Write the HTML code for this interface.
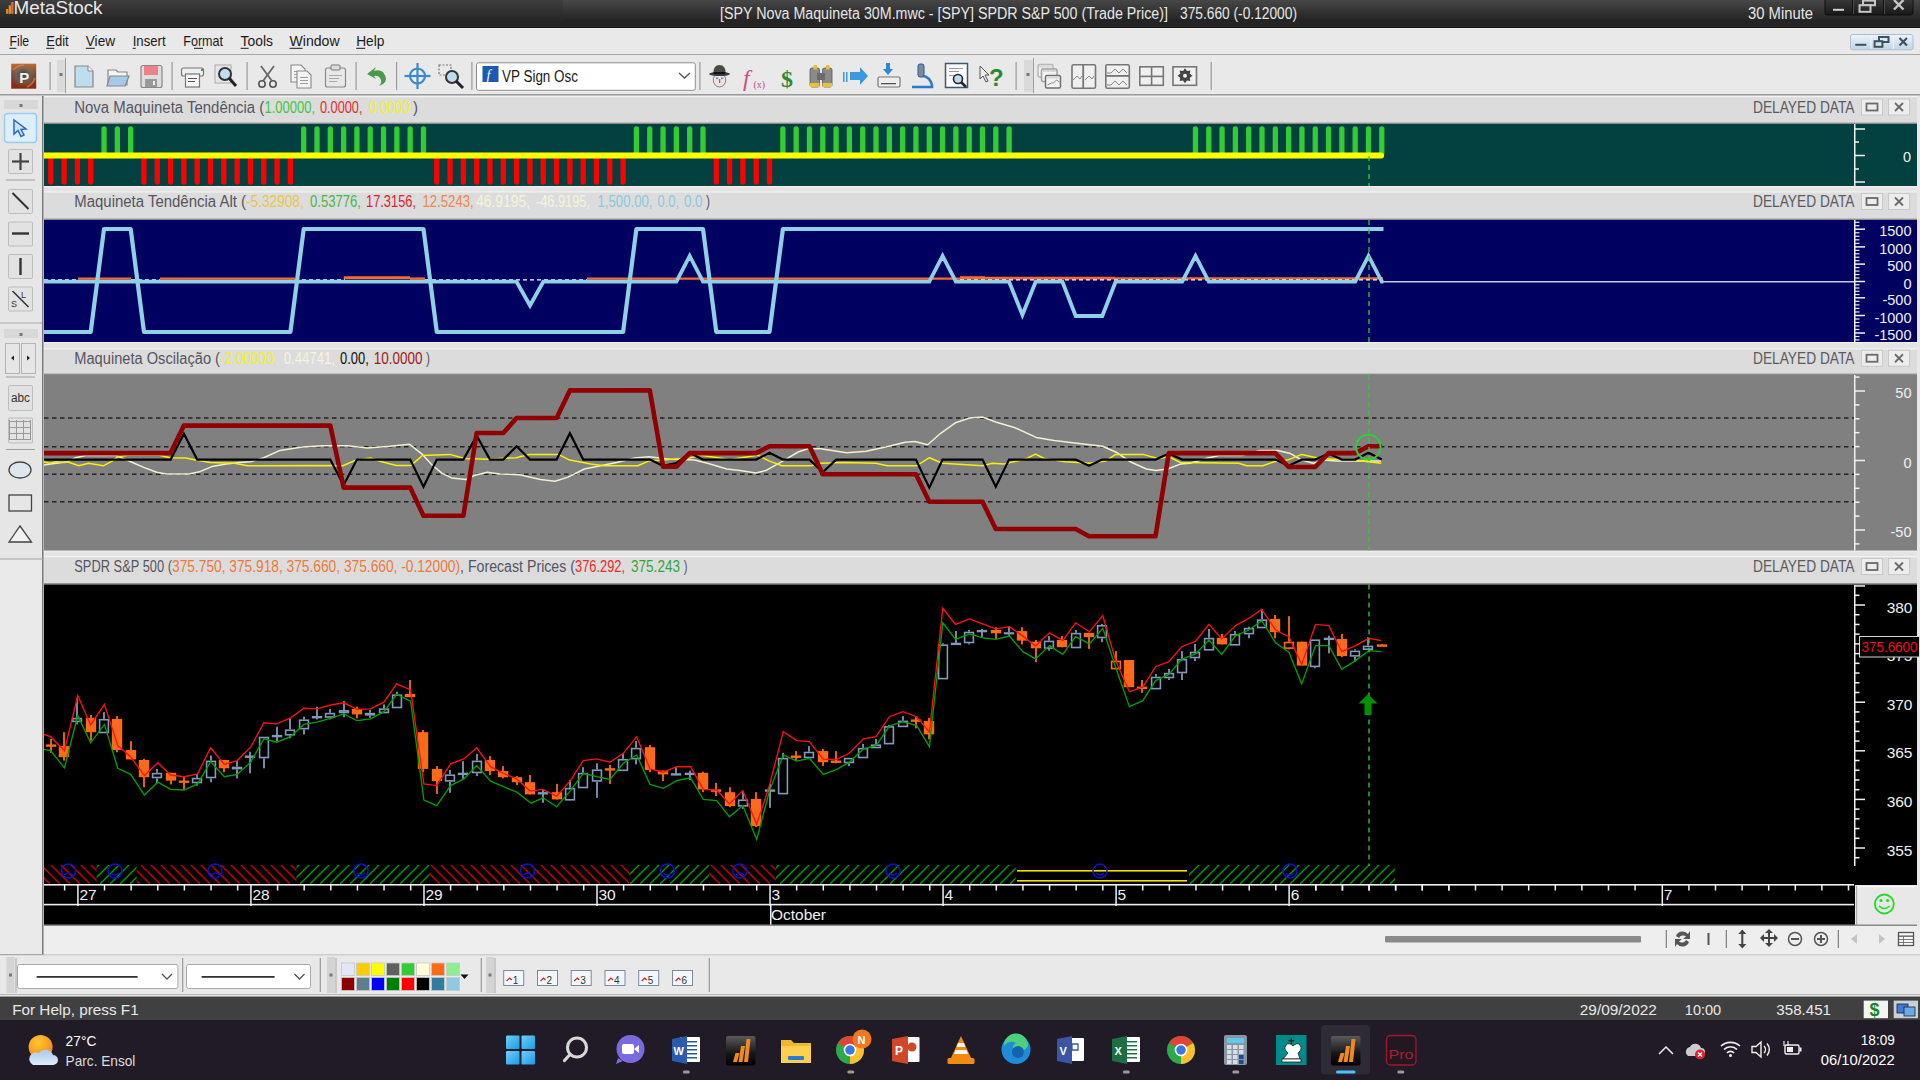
<!DOCTYPE html>
<html><head><meta charset="utf-8"><title>MetaStock</title>
<style>html,body{margin:0;padding:0;width:1920px;height:1080px;overflow:hidden;background:#EBEBEB}
svg{display:block} text{font-family:"Liberation Sans",sans-serif}</style></head>
<body><svg width="1920" height="1080" viewBox="0 0 1920 1080" shape-rendering="auto">
<rect x="0" y="0" width="1920" height="1080" fill="#EBEBEB" />
<defs><linearGradient id="tg" x1="0" y1="0" x2="0" y2="1"><stop offset="0" stop-color="#474747"/><stop offset="0.55" stop-color="#2C2C2C"/><stop offset="0.75" stop-color="#242424"/><stop offset="1" stop-color="#262626"/></linearGradient><linearGradient id="tg2" x1="0" y1="0" x2="0" y2="1"><stop offset="0" stop-color="#3E3E3E"/><stop offset="1" stop-color="#262626"/></linearGradient><linearGradient id="pg" x1="0" y1="0" x2="1" y2="1"><stop offset="0" stop-color="#E08030"/><stop offset="0.5" stop-color="#7A3A1A"/><stop offset="1" stop-color="#C05018"/></linearGradient><linearGradient id="msg" x1="0" y1="0" x2="0" y2="1"><stop offset="0" stop-color="#5A5A5A"/><stop offset="0.6" stop-color="#151515"/><stop offset="1" stop-color="#000"/></linearGradient><pattern id="hr" width="10" height="19" patternUnits="userSpaceOnUse" x="0" y="865"><line x1="-2" y1="-3" x2="20" y2="19" stroke="#D00000" stroke-width="1.3"/><line x1="-12" y1="-3" x2="10" y2="19" stroke="#D00000" stroke-width="1.3"/></pattern><pattern id="hg" width="10" height="19" patternUnits="userSpaceOnUse" x="0" y="865"><line x1="12" y1="-3" x2="-10" y2="19" stroke="#00A000" stroke-width="1.3"/><line x1="22" y1="-3" x2="0" y2="19" stroke="#00A000" stroke-width="1.3"/></pattern><clipPath id="c1"><rect x="44" y="124" width="1810" height="62"/></clipPath><clipPath id="c2"><rect x="44" y="220" width="1810" height="122"/></clipPath><clipPath id="c3"><rect x="44" y="375" width="1810" height="175.5"/></clipPath><clipPath id="c4"><rect x="44" y="584.5" width="1810" height="300"/></clipPath></defs>
<rect x="0" y="0" width="1920" height="28" fill="url(#tg)" />
<rect x="0" y="0" width="563" height="21" fill="url(#tg2)" />
<rect x="0" y="27" width="1920" height="1.2" fill="#161616" />
<rect x="6" y="9.0" width="2.3" height="4.8" fill="#D88A20" />
<rect x="8.7" y="5.300000000000001" width="2.3" height="8.5" fill="#F08A20" />
<rect x="11.2" y="2.0" width="2.3" height="11.8" fill="#E07028" />
<text x="13.5" y="13.8" font-size="17.5" fill="#EAEAEA" text-anchor="start" font-weight="normal" textLength="89" lengthAdjust="spacingAndGlyphs" >MetaStock</text>
<text x="720" y="19" font-size="16" fill="#E6E6E6" text-anchor="start" font-weight="normal" textLength="448" lengthAdjust="spacingAndGlyphs" >[SPY Nova Maquineta 30M.mwc - [SPY] SPDR S&amp;P 500 (Trade Price)]</text>
<text x="1180" y="19" font-size="16" fill="#E6E6E6" text-anchor="start" font-weight="normal" textLength="117" lengthAdjust="spacingAndGlyphs" >375.660 (-0.12000)</text>
<text x="1748" y="19" font-size="16" fill="#E6E6E6" text-anchor="start" font-weight="normal" textLength="65" lengthAdjust="spacingAndGlyphs" >30 Minute</text>
<defs><linearGradient id="wb" x1="0" y1="0" x2="0" y2="1"><stop offset="0" stop-color="#404040"/><stop offset="1" stop-color="#181818"/></linearGradient><linearGradient id="mb" x1="0" y1="0" x2="0" y2="1"><stop offset="0" stop-color="#EEF4FA"/><stop offset="1" stop-color="#C0D4E4"/></linearGradient></defs>
<rect x="1825" y="-4" width="88" height="19" rx="2.5" fill="url(#wb)" stroke="#0E0E0E" stroke-width="1"/>
<rect x="1852" y="0" width="1" height="14" fill="#111" />
<rect x="1853" y="0" width="1" height="14" fill="#4A4A4A" />
<rect x="1883" y="0" width="1" height="14" fill="#111" />
<rect x="1884" y="0" width="1" height="14" fill="#4A4A4A" />
<rect x="1833" y="8.8" width="11" height="2" fill="#CFCFCF" />
<rect x="1863" y="0.6" width="12" height="4.6" fill="none" stroke="#C8C8C8" stroke-width="2"/><rect x="1859.5" y="5.2" width="11" height="6.6" fill="url(#wb)" stroke="#C8C8C8" stroke-width="2"/>
<line x1="1894" y1="0" x2="1903.5" y2="9.5" stroke="#C8C8C8" stroke-width="2.4" />
<line x1="1903.5" y1="0" x2="1894" y2="9.5" stroke="#C8C8C8" stroke-width="2.4" />
<rect x="0" y="28" width="1920" height="26" fill="#E9E9E9" />
<rect x="0" y="54" width="1920" height="1" fill="#A8A8A8" />
<text x="9.4" y="46.3" font-size="15" fill="#1A1A1A" text-anchor="start" font-weight="normal" textLength="19.8" lengthAdjust="spacingAndGlyphs" >File</text>
<text x="46.2" y="46.3" font-size="15" fill="#1A1A1A" text-anchor="start" font-weight="normal" textLength="22.5" lengthAdjust="spacingAndGlyphs" >Edit</text>
<text x="85.8" y="46.3" font-size="15" fill="#1A1A1A" text-anchor="start" font-weight="normal" textLength="29.2" lengthAdjust="spacingAndGlyphs" >View</text>
<text x="132.7" y="46.3" font-size="15" fill="#1A1A1A" text-anchor="start" font-weight="normal" textLength="32.9" lengthAdjust="spacingAndGlyphs" >Insert</text>
<text x="183.3" y="46.3" font-size="15" fill="#1A1A1A" text-anchor="start" font-weight="normal" textLength="39.7" lengthAdjust="spacingAndGlyphs" >Format</text>
<text x="240.6" y="46.3" font-size="15" fill="#1A1A1A" text-anchor="start" font-weight="normal" textLength="32.4" lengthAdjust="spacingAndGlyphs" >Tools</text>
<text x="289.6" y="46.3" font-size="15" fill="#1A1A1A" text-anchor="start" font-weight="normal" textLength="50" lengthAdjust="spacingAndGlyphs" >Window</text>
<text x="356.2" y="46.3" font-size="15" fill="#1A1A1A" text-anchor="start" font-weight="normal" textLength="28.2" lengthAdjust="spacingAndGlyphs" >Help</text>
<rect x="9.4" y="47.8" width="7" height="1" fill="#1A1A1A" />
<rect x="46.2" y="47.8" width="8" height="1" fill="#1A1A1A" />
<rect x="85.8" y="47.8" width="9" height="1" fill="#1A1A1A" />
<rect x="132.7" y="47.8" width="3" height="1" fill="#1A1A1A" />
<rect x="194" y="47.8" width="9" height="1" fill="#1A1A1A" />
<rect x="240.6" y="47.8" width="8" height="1" fill="#1A1A1A" />
<rect x="289.6" y="47.8" width="13" height="1" fill="#1A1A1A" />
<rect x="356.2" y="47.8" width="9" height="1" fill="#1A1A1A" />
<rect x="1850.5" y="34.5" width="62.5" height="15.3" rx="2" fill="url(#mb)" stroke="#A8C0D4" stroke-width="1"/>
<rect x="1870.5" y="35.5" width="1" height="13.5" fill="#F4F8FC" />
<rect x="1892.8" y="35.5" width="1" height="13.5" fill="#F4F8FC" />
<rect x="1855.3" y="43.8" width="11" height="2" fill="#3A5262" />
<rect x="1879" y="37" width="9.5" height="5" fill="none" stroke="#3A5262" stroke-width="2"/><rect x="1874.6" y="41.2" width="7.8" height="5.6" fill="#D8E6F0" stroke="#3A5262" stroke-width="2"/>
<line x1="1899.5" y1="38" x2="1907" y2="45.5" stroke="#3A5262" stroke-width="2.2" />
<line x1="1907" y1="38" x2="1899.5" y2="45.5" stroke="#3A5262" stroke-width="2.2" />
<rect x="0" y="55" width="1920" height="39" fill="#E9E9E9" />
<rect x="0" y="94" width="1920" height="1.5" fill="#9A9A9A" />
<defs><linearGradient id="pg2" x1="0" y1="0" x2="0" y2="1"><stop offset="0" stop-color="#C86A28"/><stop offset="0.45" stop-color="#6A4A3A"/><stop offset="1" stop-color="#8A2810"/></linearGradient><radialGradient id="pg3" cx="0.5" cy="0.45" r="0.5"><stop offset="0" stop-color="#303030" stop-opacity="0.9"/><stop offset="0.6" stop-color="#707070" stop-opacity="0.5"/><stop offset="1" stop-color="#707070" stop-opacity="0"/></radialGradient></defs>
<rect x="11.2" y="63.7" width="25" height="25" fill="url(#pg2)" />
<rect x="11.2" y="63.7" width="25" height="25" fill="url(#pg3)" />
<path d="M27,87 q6,-3 8,-9" fill="none" stroke="#E89040" stroke-width="1.8" stroke-opacity="0.6"/><path d="M13,70 q5,-5 11,-5" fill="none" stroke="#E8A060" stroke-width="1.5" stroke-opacity="0.5"/>
<text x="19.3" y="82.5" font-size="15" fill="#F0F0F0" text-anchor="start" font-weight="bold"  >P</text>
<rect x="49.5" y="62" width="1.2" height="28" fill="#9A9A9A" />
<rect x="171.5" y="62" width="1.2" height="28" fill="#9A9A9A" />
<rect x="246.5" y="62" width="1.2" height="28" fill="#9A9A9A" />
<rect x="355.5" y="62" width="1.2" height="28" fill="#9A9A9A" />
<rect x="396" y="62" width="1.2" height="28" fill="#9A9A9A" />
<rect x="471.3" y="62" width="1.2" height="28" fill="#9A9A9A" />
<rect x="699.3" y="62" width="1.2" height="28" fill="#9A9A9A" />
<rect x="1015.5" y="62" width="1.2" height="28" fill="#9A9A9A" />
<rect x="1210.6" y="62" width="1.2" height="28" fill="#9A9A9A" />
<rect x="57" y="60" width="9" height="32" fill="#DADADA" />
<rect x="59.5" y="73" width="3" height="3" fill="#777" />
<rect x="1024" y="60" width="9" height="32" fill="#DADADA" />
<rect x="1026.5" y="73" width="3" height="3" fill="#777" />
<rect x="65" y="58" width="1" height="35" fill="#A0A0A0" />
<rect x="1033" y="58" width="1" height="35" fill="#A0A0A0" />
<path d="M75,66 h13 l5,5 v16 h-18 z" fill="#BFDDF0" stroke="#888" stroke-width="1.2"/>
<path d="M88,66 v5 h5" fill="#FFF" stroke="#888" stroke-width="1"/>
<path d="M108,70 h8 l2,2 h9 v13 h-19 z" fill="#F4F4F4" stroke="#888" stroke-width="1.2"/>
<path d="M110,76 h19 l-4,10 h-18 z" fill="#A8C8E8" stroke="#888" stroke-width="1.2"/>
<rect x="141" y="65.5" width="21" height="22" rx="2" fill="#DDD" stroke="#888" stroke-width="1.2"/>
<rect x="144" y="66" width="14" height="9" fill="#F08088" />
<rect x="145" y="79" width="12" height="8" fill="#999" />
<rect x="153" y="81" width="2" height="4" fill="#EEE" />
<rect x="181.5" y="68" width="22" height="8" rx="2" fill="#EEE" stroke="#777" stroke-width="1.2"/>
<rect x="185.5" y="74" width="14" height="13" fill="#F6F6F6" stroke="#777" stroke-width="1.2"/>
<rect x="188" y="78" width="9" height="1" fill="#555" />
<rect x="188" y="81" width="7" height="1" fill="#555" />
<rect x="201" y="69" width="2" height="2" fill="#3A3" />
<rect x="215" y="65" width="16" height="18" fill="#E6E6E6" stroke="#AAA" stroke-width="1"/>
<circle cx="225" cy="74" r="6" fill="#BFDDF0" stroke="#333" stroke-width="2"/>
<line x1="229" y1="78" x2="236" y2="86" stroke="#222" stroke-width="3" />
<circle cx="262" cy="84" r="3.2" fill="none" stroke="#555" stroke-width="1.6"/><circle cx="273" cy="84" r="3.2" fill="none" stroke="#555" stroke-width="1.6"/>
<line x1="263" y1="81" x2="274" y2="66" stroke="#666" stroke-width="1.8" />
<line x1="272" y1="81" x2="261" y2="66" stroke="#666" stroke-width="1.8" />
<path d="M291,65 h10 l4,4 v13 h-14 z" fill="#F4F4F4" stroke="#888" stroke-width="1.1"/>
<rect x="294" y="71" width="8" height="0.8" fill="#888" />
<rect x="294" y="74" width="8" height="0.8" fill="#888" />
<rect x="294" y="77" width="8" height="0.8" fill="#888" />
<path d="M297,71 h10 l4,4 v13 h-14 z" fill="#F4F4F4" stroke="#888" stroke-width="1.1"/>
<rect x="300" y="77" width="8" height="0.8" fill="#888" />
<rect x="300" y="80" width="8" height="0.8" fill="#888" />
<rect x="300" y="83" width="8" height="0.8" fill="#888" />
<rect x="325.5" y="68" width="20" height="19" rx="2" fill="#E8E8E8" stroke="#888" stroke-width="1.2"/>
<rect x="331" y="65" width="9" height="5" rx="1" fill="#DDD" stroke="#777" stroke-width="1"/>
<rect x="329" y="75" width="13" height="0.8" fill="#999" />
<rect x="329" y="78" width="10" height="0.8" fill="#999" />
<rect x="329" y="81" width="8" height="0.8" fill="#999" />
<path d="M383,84 q6,-4 0,-12 q-4,-3 -9,-1 l2,-4 l-9,7 l9,5 l-2,-3 q4,-1 6,2 q3,4 -1,8 z" fill="#4A9A4A"/>
<circle cx="417.5" cy="76" r="7.5" fill="#E8EEF4" stroke="#3A8AC8" stroke-width="2.2"/>
<line x1="404.5" y1="76" x2="430.5" y2="76" stroke="#3A8AC8" stroke-width="2.2" />
<line x1="417.5" y1="63" x2="417.5" y2="89" stroke="#3A8AC8" stroke-width="2.2" />
<rect x="439" y="65" width="12" height="10" fill="none" stroke="#777" stroke-width="1.2" stroke-dasharray="2,1.5"/>
<circle cx="452" cy="77" r="6" fill="#BFDDF0" stroke="#333" stroke-width="2"/>
<line x1="456" y1="81" x2="463" y2="88" stroke="#222" stroke-width="3" />
<rect x="476.5" y="62.8" width="218.8" height="27.5" rx="2" fill="#FFF" stroke="#8E8E8E" stroke-width="1"/>
<rect x="482.5" y="66" width="16" height="16" fill="#1A5AB0" />
<text x="486.5" y="79.5" font-size="14" fill="#FFF" text-anchor="start" font-weight="normal"  font-style="italic" style="font-family:'Liberation Serif'">f</text>
<text x="502" y="82" font-size="16" fill="#1A1A1A" text-anchor="start" font-weight="normal" textLength="76" lengthAdjust="spacingAndGlyphs" >VP Sign Osc</text>
<path d="M679,73 l5.5,5 l5.5,-5" fill="none" stroke="#555" stroke-width="1.3"/>
<ellipse cx="719.5" cy="80" rx="6.2" ry="7" fill="#F4E2E2" stroke="#777" stroke-width="0.9"/>
<rect x="716" y="77.5" width="2.2" height="1.6" fill="#5A8AC8" />
<rect x="721" y="77.5" width="2.2" height="1.6" fill="#5A8AC8" />
<rect x="719.2" y="79" width="1" height="4" fill="#555" />
<path d="M713.2,74 q0,-9 6.3,-9 q6.3,0 6.3,9 z" fill="#4A4A4A"/>
<ellipse cx="719.5" cy="74" rx="10.5" ry="2" fill="#3A3A3A"/>
<rect x="713.5" y="72" width="12" height="2" fill="#111" />
<text x="743" y="86" font-size="24" fill="#D04A80" text-anchor="start" font-weight="normal"  font-style="italic" style="font-family:'Liberation Serif'">f</text>
<text x="753.5" y="88" font-size="10" fill="#D04A80" text-anchor="start" font-weight="normal"  style="font-family:'Liberation Serif'">(x)</text>
<text x="781" y="86.5" font-size="24" fill="#2A8A32" text-anchor="start" font-weight="bold"  style="font-family:'Liberation Serif'">$</text>
<rect x="810" y="68" width="9.5" height="19" rx="2" fill="#8A8A8A" stroke="#555" stroke-width="0.8"/><rect x="822.5" y="68" width="9.5" height="19" rx="2" fill="#8A8A8A" stroke="#555" stroke-width="0.8"/>
<rect x="817" y="73" width="8" height="7" fill="#6A6A6A" />
<rect x="810" y="83" width="9.5" height="4" fill="#E8C030" />
<rect x="822.5" y="83" width="9.5" height="4" fill="#E8C030" />
<rect x="813.5" y="65" width="3.5" height="4.5" fill="#E8C030" />
<rect x="826" y="65" width="3.5" height="4.5" fill="#E8C030" />
<path d="M850,72 h10 v-5 l8,9 l-8,9 v-5 h-10 z" fill="#3A9AE0"/>
<rect x="843" y="72" width="1.5" height="10" fill="#3A9AE0" />
<rect x="846" y="72" width="1.5" height="10" fill="#3A9AE0" />
<rect x="878" y="77" width="22" height="10" rx="1.5" fill="#EEE" stroke="#777" stroke-width="1.2"/>
<rect x="881" y="83" width="15" height="1.3" fill="#555" />
<path d="M886,63 h4 v6 h3 l-5,6 l-5,-6 h3 z" fill="#2A8AD8"/>
<path d="M912,87 h20 v-2 q-2,-8 -9,-9" fill="none" stroke="#2A7AC8" stroke-width="2.5"/>
<rect x="918" y="64" width="6" height="13" rx="2" fill="#7A8A9A" stroke="#2A5A9A" stroke-width="1"/>
<rect x="945.5" y="63.5" width="22" height="24" fill="#FAFAFA" stroke="#3A5A70" stroke-width="1.5"/>
<rect x="949" y="68" width="14" height="1" fill="#99A" />
<rect x="949" y="71" width="10" height="1" fill="#99A" />
<rect x="949" y="75" width="6" height="1" fill="#99A" />
<circle cx="958" cy="79" r="4.5" fill="#BFDDF0" stroke="#223" stroke-width="1.6"/>
<line x1="961" y1="82" x2="966" y2="87" stroke="#222" stroke-width="2.5" />
<path d="M980,66 l0,13 l3,-3 l3,6 l2,-1 l-3,-6 l4,0 z" fill="#EEE" stroke="#555" stroke-width="1"/>
<text x="989" y="85.5" font-size="24" fill="#2A8A32" text-anchor="start" font-weight="bold"  >?</text>
<rect x="1038" y="64.5" width="15" height="12.5" rx="1.5" fill="#F2F2F2" stroke="#B8B8B8" stroke-width="1.5"/>
<rect x="1039" y="65.5" width="13" height="2" fill="#D8D8D8" />
<rect x="1041.5" y="69" width="15.5" height="12.5" rx="1.5" fill="#F2F2F2" stroke="#A0A0A0" stroke-width="1.5"/>
<rect x="1042.5" y="70" width="13.5" height="2" fill="#D8D8D8" />
<rect x="1045.5" y="75.5" width="15.0" height="12.5" rx="1.5" fill="#F2F2F2" stroke="#707070" stroke-width="1.5"/>
<rect x="1046.5" y="76.5" width="13.0" height="2" fill="#D8D8D8" />
<path d="M1047.5,85 l4,-2 h2 l3,-3 l3,2" fill="none" stroke="#888" stroke-width="1"/>
<rect x="1072" y="64.8" width="23.5" height="23.5" rx="1.5" fill="#F0F0F0" stroke="#777" stroke-width="1.6"/>
<rect x="1082.3" y="65" width="1.8" height="23.2" fill="#777" />
<path d="M1073,80 l4,-4 l3,3 l2,-3 M1085,80 l4,-4 l3,3 l2,-3" fill="none" stroke="#888" stroke-width="1"/>
<rect x="1105.8" y="64.8" width="23.5" height="23.5" rx="1.5" fill="#F0F0F0" stroke="#777" stroke-width="1.6"/>
<rect x="1106" y="75" width="23.2" height="1.8" fill="#777" />
<path d="M1107,73 h4 l4,-4 l4,4 l4,-4 l4,4 M1107,85 h4 l4,-4 l4,4 l4,-4 l4,4" fill="none" stroke="#888" stroke-width="1"/>
<rect x="1139.8" y="66.8" width="23.5" height="18.5" fill="#F0F0F0" stroke="#777" stroke-width="1.6"/>
<rect x="1150.8" y="67" width="1.6" height="18.2" fill="#777" />
<rect x="1140" y="75.6" width="23.2" height="1.6" fill="#777" />
<rect x="1173" y="66.8" width="23.5" height="18.5" fill="#F0F0F0" stroke="#777" stroke-width="1.6"/>
<polygon points="1192.50,75.80 1189.80,77.79 1190.30,81.10 1186.99,80.60 1185.00,83.30 1183.01,80.60 1179.70,81.10 1180.20,77.79 1177.50,75.80 1180.20,73.81 1179.70,70.50 1183.01,71.00 1185.00,68.30 1186.99,71.00 1190.30,70.50 1189.80,73.81" fill="#444"/>
<circle cx="1185" cy="75.8" r="2" fill="#F0F0F0"/>
<rect x="0" y="96" width="42" height="463" fill="#E6E6E6" />
<rect x="0" y="559" width="43" height="396" fill="#EAEAEA" />
<rect x="42" y="96" width="1.5" height="859" fill="#7A7A7A" />
<rect x="0" y="954" width="43" height="1" fill="#A0A0A0" />
<rect x="4" y="100" width="34" height="9" fill="#D8D8D8" />
<rect x="19.5" y="104" width="3" height="3" fill="#777" />
<rect x="4.5" y="113.5" width="32" height="29" rx="3" fill="#DDEEFC" stroke="#9CCCF4" stroke-width="1.5"/>
<path d="M14,120 l0,14 l4,-3.5 l3,6 l3,-1.5 l-3,-5.5 l5,-0.5 z" fill="#CFE4F8" stroke="#2A6AC0" stroke-width="1.5"/>
<rect x="8.5" y="149.5" width="24" height="24" rx="1" fill="#E2E2E2" stroke="#BDBDBD" stroke-width="1"/>
<line x1="12" y1="161.5" x2="29" y2="161.5" stroke="#444" stroke-width="2.2" />
<line x1="20.5" y1="153" x2="20.5" y2="170" stroke="#444" stroke-width="2.2" />
<rect x="6" y="179.5" width="29" height="1" fill="#A0A0A0" />
<rect x="8.5" y="189.5" width="24" height="24" rx="1" fill="#E2E2E2" stroke="#BDBDBD" stroke-width="1"/>
<line x1="12.5" y1="193" x2="28.5" y2="209" stroke="#333" stroke-width="2" />
<rect x="8.5" y="222.0" width="24" height="24" rx="1" fill="#E2E2E2" stroke="#BDBDBD" stroke-width="1"/>
<line x1="12" y1="233.5" x2="29" y2="233.5" stroke="#333" stroke-width="2.4" />
<rect x="8.5" y="254.5" width="24" height="24" rx="1" fill="#E2E2E2" stroke="#BDBDBD" stroke-width="1"/>
<line x1="20.5" y1="258" x2="20.5" y2="275" stroke="#333" stroke-width="2.4" />
<rect x="8.5" y="287.0" width="24" height="24" rx="1" fill="#E2E2E2" stroke="#BDBDBD" stroke-width="1"/>
<line x1="12.5" y1="291" x2="28.5" y2="307" stroke="#333" stroke-width="1.6" />
<text x="21" y="298" font-size="9" fill="#333" text-anchor="start" font-weight="normal"  >L</text>
<text x="11" y="307" font-size="9" fill="#333" text-anchor="start" font-weight="normal"  >S</text>
<rect x="0" y="322.5" width="42" height="1" fill="#A8A8A8" />
<rect x="4" y="329" width="34" height="9" fill="#D8D8D8" />
<rect x="19.5" y="333" width="3" height="3" fill="#777" />
<rect x="5.5" y="343.5" width="14" height="30" fill="#E6E6E6" stroke="#B4B4B4" stroke-width="1"/><rect x="21.5" y="343.5" width="14" height="30" fill="#E6E6E6" stroke="#B4B4B4" stroke-width="1"/>
<path d="M14,355.5 l-3,2.5 l3,2.5 z" fill="#222"/><path d="M27,355.5 l3,2.5 l-3,2.5 z" fill="#222"/>
<rect x="6" y="376.5" width="29" height="1" fill="#A0A0A0" />
<rect x="8.5" y="385.5" width="24" height="25" rx="1" fill="#E2E2E2" stroke="#BDBDBD" stroke-width="1"/>
<text x="11" y="402" font-size="12" fill="#333" text-anchor="start" font-weight="normal" textLength="19" lengthAdjust="spacingAndGlyphs" >abc</text>
<rect x="8.5" y="418.0" width="24" height="25" rx="1" fill="#E2E2E2" stroke="#BDBDBD" stroke-width="1"/>
<rect x="9" y="420" width="1" height="20" fill="#999" />
<rect x="16" y="420" width="1" height="20" fill="#999" />
<rect x="23" y="420" width="1" height="20" fill="#999" />
<rect x="30" y="420" width="1" height="20" fill="#999" />
<rect x="9" y="421" width="22" height="1" fill="#999" />
<rect x="9" y="427" width="22" height="1" fill="#999" />
<rect x="9" y="433" width="22" height="1" fill="#999" />
<rect x="9" y="439" width="22" height="1" fill="#999" />
<rect x="6" y="449" width="29" height="1" fill="#A0A0A0" />
<ellipse cx="20" cy="470" rx="11" ry="8" fill="#E0E6EE" stroke="#444" stroke-width="1.3"/>
<rect x="9" y="495" width="22.5" height="16" fill="#E6E6E6" stroke="#444" stroke-width="1.3"/>
<path d="M9,542 l11,-16 l11.5,16 z" fill="#F2F2F2" stroke="#444" stroke-width="1.3"/>
<rect x="0" y="558.5" width="43" height="1" fill="#A0A0A0" />
<rect x="43" y="96" width="1877" height="1" fill="#9A9A9A" />
<rect x="1917" y="96" width="3" height="859" fill="#E8E8E8" />
<rect x="44" y="186" width="1873" height="5.3" fill="#E4E4E4" />
<rect x="44" y="186" width="1873" height="1.2" fill="#EFEFEF" />
<rect x="44" y="342" width="1873" height="6.3" fill="#E4E4E4" />
<rect x="44" y="342" width="1873" height="1.2" fill="#EFEFEF" />
<rect x="44" y="550.5" width="1873" height="5.5" fill="#E4E4E4" />
<rect x="44" y="550.5" width="1873" height="1.2" fill="#EFEFEF" />
<rect x="44" y="96" width="1873" height="28" fill="#DCDCDC" />
<rect x="44" y="96" width="1873" height="1.2" fill="#F2F2F2" />
<rect x="44" y="122.6" width="1873" height="1.4" fill="#8C8C8C" />
<text x="74.25" y="112.6" font-size="15.6" fill="#555560" text-anchor="start" font-weight="normal" textLength="190" lengthAdjust="spacingAndGlyphs" >Nova Maquineta Tendência (</text>
<text x="264.5" y="112.6" font-size="15.6" fill="#3CC83C" text-anchor="start" font-weight="normal" textLength="50.5" lengthAdjust="spacingAndGlyphs" >1.00000,</text>
<text x="320" y="112.6" font-size="15.6" fill="#F02828" text-anchor="start" font-weight="normal" textLength="42.5" lengthAdjust="spacingAndGlyphs" >0.0000,</text>
<text x="368.75" y="112.6" font-size="15.6" fill="#F0F028" text-anchor="start" font-weight="normal" textLength="41.25" lengthAdjust="spacingAndGlyphs" >0.0000</text>
<text x="413" y="112.6" font-size="15.6" fill="#555560" text-anchor="start" font-weight="normal" textLength="5" lengthAdjust="spacingAndGlyphs" >)</text>
<text x="1753" y="112.6" font-size="15.6" fill="#5A5A60" text-anchor="start" font-weight="normal" textLength="101.5" lengthAdjust="spacingAndGlyphs" >DELAYED DATA</text>
<rect x="1861.5" y="99" width="21" height="16" fill="#EDEDED" stroke="#C8C8C8" stroke-width="1"/>
<rect x="1866.5" y="103.5" width="11" height="7" fill="none" stroke="#6A6A6A" stroke-width="1.8"/>
<rect x="1888.5" y="99" width="21" height="16" fill="#EDEDED" stroke="#C8C8C8" stroke-width="1"/>
<line x1="1895" y1="103" x2="1903" y2="111" stroke="#6A6A6A" stroke-width="1.8" />
<line x1="1903" y1="103" x2="1895" y2="111" stroke="#6A6A6A" stroke-width="1.8" />
<rect x="44" y="191.3" width="1873" height="28.69999999999999" fill="#DCDCDC" />
<rect x="44" y="191.3" width="1873" height="1.2" fill="#F2F2F2" />
<rect x="44" y="218.6" width="1873" height="1.4" fill="#8C8C8C" />
<text x="74.25" y="207.1" font-size="15.6" fill="#555560" text-anchor="start" font-weight="normal" textLength="171.75" lengthAdjust="spacingAndGlyphs" >Maquineta Tendência Alt (</text>
<text x="246" y="207.1" font-size="15.6" fill="#E8C848" text-anchor="start" font-weight="normal" textLength="57.75" lengthAdjust="spacingAndGlyphs" >-5.32908,</text>
<text x="310" y="207.1" font-size="15.6" fill="#48B848" text-anchor="start" font-weight="normal" textLength="51" lengthAdjust="spacingAndGlyphs" >0.53776,</text>
<text x="366" y="207.1" font-size="15.6" fill="#E02030" text-anchor="start" font-weight="normal" textLength="50" lengthAdjust="spacingAndGlyphs" >17.3156,</text>
<text x="422.5" y="207.1" font-size="15.6" fill="#F08848" text-anchor="start" font-weight="normal" textLength="51.25" lengthAdjust="spacingAndGlyphs" >12.5243,</text>
<text x="476" y="207.1" font-size="15.6" fill="#F4F4DC" text-anchor="start" font-weight="normal" textLength="54" lengthAdjust="spacingAndGlyphs" >46.9195,</text>
<text x="536" y="207.1" font-size="15.6" fill="#F4F4DC" text-anchor="start" font-weight="normal" textLength="54" lengthAdjust="spacingAndGlyphs" >-46.9195,</text>
<text x="597.5" y="207.1" font-size="15.6" fill="#8CC8E0" text-anchor="start" font-weight="normal" textLength="55" lengthAdjust="spacingAndGlyphs" >1,500.00,</text>
<text x="657.5" y="207.1" font-size="15.6" fill="#8CC8E0" text-anchor="start" font-weight="normal" textLength="21.5" lengthAdjust="spacingAndGlyphs" >0.0,</text>
<text x="684" y="207.1" font-size="15.6" fill="#8CC8E0" text-anchor="start" font-weight="normal" textLength="18.5" lengthAdjust="spacingAndGlyphs" >0.0</text>
<text x="706" y="207.1" font-size="15.6" fill="#555560" text-anchor="start" font-weight="normal" textLength="4" lengthAdjust="spacingAndGlyphs" >)</text>
<text x="1753" y="207.1" font-size="15.6" fill="#5A5A60" text-anchor="start" font-weight="normal" textLength="101.5" lengthAdjust="spacingAndGlyphs" >DELAYED DATA</text>
<rect x="1861.5" y="193.5" width="21" height="16" fill="#EDEDED" stroke="#C8C8C8" stroke-width="1"/>
<rect x="1866.5" y="198.0" width="11" height="7" fill="none" stroke="#6A6A6A" stroke-width="1.8"/>
<rect x="1888.5" y="193.5" width="21" height="16" fill="#EDEDED" stroke="#C8C8C8" stroke-width="1"/>
<line x1="1895" y1="197.5" x2="1903" y2="205.5" stroke="#6A6A6A" stroke-width="1.8" />
<line x1="1903" y1="197.5" x2="1895" y2="205.5" stroke="#6A6A6A" stroke-width="1.8" />
<rect x="44" y="348.3" width="1873" height="26.69999999999999" fill="#DCDCDC" />
<rect x="44" y="348.3" width="1873" height="1.2" fill="#F2F2F2" />
<rect x="44" y="373.6" width="1873" height="1.4" fill="#8C8C8C" />
<text x="74.25" y="363.85" font-size="15.6" fill="#555560" text-anchor="start" font-weight="normal" textLength="145.75" lengthAdjust="spacingAndGlyphs" >Maquineta Oscilação (</text>
<text x="220" y="363.85" font-size="15.6" fill="#F0F028" text-anchor="start" font-weight="normal" textLength="57.5" lengthAdjust="spacingAndGlyphs" >-2.00000,</text>
<text x="283.75" y="363.85" font-size="15.6" fill="#F4F4DC" text-anchor="start" font-weight="normal" textLength="51.25" lengthAdjust="spacingAndGlyphs" >0.44741,</text>
<text x="340" y="363.85" font-size="15.6" fill="#101010" text-anchor="start" font-weight="normal" textLength="28.75" lengthAdjust="spacingAndGlyphs" >0.00,</text>
<text x="373.75" y="363.85" font-size="15.6" fill="#A01818" text-anchor="start" font-weight="normal" textLength="48.75" lengthAdjust="spacingAndGlyphs" >10.0000</text>
<text x="426" y="363.85" font-size="15.6" fill="#555560" text-anchor="start" font-weight="normal" textLength="4" lengthAdjust="spacingAndGlyphs" >)</text>
<text x="1753" y="363.85" font-size="15.6" fill="#5A5A60" text-anchor="start" font-weight="normal" textLength="101.5" lengthAdjust="spacingAndGlyphs" >DELAYED DATA</text>
<rect x="1861.5" y="350.25" width="21" height="16" fill="#EDEDED" stroke="#C8C8C8" stroke-width="1"/>
<rect x="1866.5" y="354.75" width="11" height="7" fill="none" stroke="#6A6A6A" stroke-width="1.8"/>
<rect x="1888.5" y="350.25" width="21" height="16" fill="#EDEDED" stroke="#C8C8C8" stroke-width="1"/>
<line x1="1895" y1="354.25" x2="1903" y2="362.25" stroke="#6A6A6A" stroke-width="1.8" />
<line x1="1903" y1="354.25" x2="1895" y2="362.25" stroke="#6A6A6A" stroke-width="1.8" />
<rect x="44" y="556" width="1873" height="28.5" fill="#DCDCDC" />
<rect x="44" y="556" width="1873" height="1.2" fill="#F2F2F2" />
<rect x="44" y="583.1" width="1873" height="1.4" fill="#8C8C8C" />
<text x="74.25" y="572.1" font-size="15.6" fill="#555560" text-anchor="start" font-weight="normal" textLength="97.75" lengthAdjust="spacingAndGlyphs" >SPDR S&amp;P 500 (</text>
<text x="172" y="572.1" font-size="15.6" fill="#F07838" text-anchor="start" font-weight="normal" textLength="288" lengthAdjust="spacingAndGlyphs" >375.750, 375.918, 375.660, 375.660, -0.12000)</text>
<text x="460" y="572.1" font-size="15.6" fill="#555560" text-anchor="start" font-weight="normal" textLength="115" lengthAdjust="spacingAndGlyphs" >, Forecast Prices (</text>
<text x="575" y="572.1" font-size="15.6" fill="#F02828" text-anchor="start" font-weight="normal" textLength="50" lengthAdjust="spacingAndGlyphs" >376.292,</text>
<text x="631" y="572.1" font-size="15.6" fill="#30A838" text-anchor="start" font-weight="normal" textLength="49" lengthAdjust="spacingAndGlyphs" >375.243</text>
<text x="683.75" y="572.1" font-size="15.6" fill="#555560" text-anchor="start" font-weight="normal" textLength="3.75" lengthAdjust="spacingAndGlyphs" >)</text>
<text x="1753" y="572.1" font-size="15.6" fill="#5A5A60" text-anchor="start" font-weight="normal" textLength="101.5" lengthAdjust="spacingAndGlyphs" >DELAYED DATA</text>
<rect x="1861.5" y="558.5" width="21" height="16" fill="#EDEDED" stroke="#C8C8C8" stroke-width="1"/>
<rect x="1866.5" y="563.0" width="11" height="7" fill="none" stroke="#6A6A6A" stroke-width="1.8"/>
<rect x="1888.5" y="558.5" width="21" height="16" fill="#EDEDED" stroke="#C8C8C8" stroke-width="1"/>
<line x1="1895" y1="562.5" x2="1903" y2="570.5" stroke="#6A6A6A" stroke-width="1.8" />
<line x1="1903" y1="562.5" x2="1895" y2="570.5" stroke="#6A6A6A" stroke-width="1.8" />
<rect x="44" y="124" width="1873" height="62" fill="#034040" />
<rect x="1854" y="124" width="1.5" height="62" fill="#F0F0F0" />
<rect x="1855" y="128.25" width="10" height="1.5" fill="#F0F0F0" />
<rect x="1855" y="141.25" width="4" height="1.5" fill="#F0F0F0" />
<rect x="1855" y="154.75" width="10" height="1.5" fill="#F0F0F0" />
<rect x="1855" y="168.25" width="4" height="1.5" fill="#F0F0F0" />
<rect x="1855" y="181.25" width="10" height="1.5" fill="#F0F0F0" />
<text x="1911" y="162" font-size="14.5" fill="#F0F0E0" text-anchor="end" font-weight="normal"  >0</text>
<g clip-path="url(#c1)">
<line x1="50.8" y1="158" x2="50.8" y2="182" stroke="#FF0000" stroke-width="5.3" stroke-linecap="round"/>
<line x1="64.11" y1="158" x2="64.11" y2="182" stroke="#FF0000" stroke-width="5.3" stroke-linecap="round"/>
<line x1="77.42" y1="158" x2="77.42" y2="182" stroke="#FF0000" stroke-width="5.3" stroke-linecap="round"/>
<line x1="90.72999999999999" y1="158" x2="90.72999999999999" y2="182" stroke="#FF0000" stroke-width="5.3" stroke-linecap="round"/>
<line x1="104.03999999999999" y1="129" x2="104.03999999999999" y2="153" stroke="#33CC33" stroke-width="5.3" stroke-linecap="round"/>
<line x1="117.35" y1="129" x2="117.35" y2="153" stroke="#33CC33" stroke-width="5.3" stroke-linecap="round"/>
<line x1="130.66" y1="129" x2="130.66" y2="153" stroke="#33CC33" stroke-width="5.3" stroke-linecap="round"/>
<line x1="143.97" y1="158" x2="143.97" y2="182" stroke="#FF0000" stroke-width="5.3" stroke-linecap="round"/>
<line x1="157.28" y1="158" x2="157.28" y2="182" stroke="#FF0000" stroke-width="5.3" stroke-linecap="round"/>
<line x1="170.59" y1="158" x2="170.59" y2="182" stroke="#FF0000" stroke-width="5.3" stroke-linecap="round"/>
<line x1="183.89999999999998" y1="158" x2="183.89999999999998" y2="182" stroke="#FF0000" stroke-width="5.3" stroke-linecap="round"/>
<line x1="197.20999999999998" y1="158" x2="197.20999999999998" y2="182" stroke="#FF0000" stroke-width="5.3" stroke-linecap="round"/>
<line x1="210.51999999999998" y1="158" x2="210.51999999999998" y2="182" stroke="#FF0000" stroke-width="5.3" stroke-linecap="round"/>
<line x1="223.82999999999998" y1="158" x2="223.82999999999998" y2="182" stroke="#FF0000" stroke-width="5.3" stroke-linecap="round"/>
<line x1="237.14" y1="158" x2="237.14" y2="182" stroke="#FF0000" stroke-width="5.3" stroke-linecap="round"/>
<line x1="250.45" y1="158" x2="250.45" y2="182" stroke="#FF0000" stroke-width="5.3" stroke-linecap="round"/>
<line x1="263.76" y1="158" x2="263.76" y2="182" stroke="#FF0000" stroke-width="5.3" stroke-linecap="round"/>
<line x1="277.07" y1="158" x2="277.07" y2="182" stroke="#FF0000" stroke-width="5.3" stroke-linecap="round"/>
<line x1="290.38" y1="158" x2="290.38" y2="182" stroke="#FF0000" stroke-width="5.3" stroke-linecap="round"/>
<line x1="303.69" y1="129" x2="303.69" y2="153" stroke="#33CC33" stroke-width="5.3" stroke-linecap="round"/>
<line x1="317.0" y1="129" x2="317.0" y2="153" stroke="#33CC33" stroke-width="5.3" stroke-linecap="round"/>
<line x1="330.31" y1="129" x2="330.31" y2="153" stroke="#33CC33" stroke-width="5.3" stroke-linecap="round"/>
<line x1="343.62" y1="129" x2="343.62" y2="153" stroke="#33CC33" stroke-width="5.3" stroke-linecap="round"/>
<line x1="356.93" y1="129" x2="356.93" y2="153" stroke="#33CC33" stroke-width="5.3" stroke-linecap="round"/>
<line x1="370.24" y1="129" x2="370.24" y2="153" stroke="#33CC33" stroke-width="5.3" stroke-linecap="round"/>
<line x1="383.55" y1="129" x2="383.55" y2="153" stroke="#33CC33" stroke-width="5.3" stroke-linecap="round"/>
<line x1="396.86" y1="129" x2="396.86" y2="153" stroke="#33CC33" stroke-width="5.3" stroke-linecap="round"/>
<line x1="410.17" y1="129" x2="410.17" y2="153" stroke="#33CC33" stroke-width="5.3" stroke-linecap="round"/>
<line x1="423.48" y1="129" x2="423.48" y2="153" stroke="#33CC33" stroke-width="5.3" stroke-linecap="round"/>
<line x1="436.79" y1="158" x2="436.79" y2="182" stroke="#FF0000" stroke-width="5.3" stroke-linecap="round"/>
<line x1="450.1" y1="158" x2="450.1" y2="182" stroke="#FF0000" stroke-width="5.3" stroke-linecap="round"/>
<line x1="463.41" y1="158" x2="463.41" y2="182" stroke="#FF0000" stroke-width="5.3" stroke-linecap="round"/>
<line x1="476.72" y1="158" x2="476.72" y2="182" stroke="#FF0000" stroke-width="5.3" stroke-linecap="round"/>
<line x1="490.03000000000003" y1="158" x2="490.03000000000003" y2="182" stroke="#FF0000" stroke-width="5.3" stroke-linecap="round"/>
<line x1="503.34000000000003" y1="158" x2="503.34000000000003" y2="182" stroke="#FF0000" stroke-width="5.3" stroke-linecap="round"/>
<line x1="516.65" y1="158" x2="516.65" y2="182" stroke="#FF0000" stroke-width="5.3" stroke-linecap="round"/>
<line x1="529.96" y1="158" x2="529.96" y2="182" stroke="#FF0000" stroke-width="5.3" stroke-linecap="round"/>
<line x1="543.27" y1="158" x2="543.27" y2="182" stroke="#FF0000" stroke-width="5.3" stroke-linecap="round"/>
<line x1="556.58" y1="158" x2="556.58" y2="182" stroke="#FF0000" stroke-width="5.3" stroke-linecap="round"/>
<line x1="569.89" y1="158" x2="569.89" y2="182" stroke="#FF0000" stroke-width="5.3" stroke-linecap="round"/>
<line x1="583.1999999999999" y1="158" x2="583.1999999999999" y2="182" stroke="#FF0000" stroke-width="5.3" stroke-linecap="round"/>
<line x1="596.51" y1="158" x2="596.51" y2="182" stroke="#FF0000" stroke-width="5.3" stroke-linecap="round"/>
<line x1="609.8199999999999" y1="158" x2="609.8199999999999" y2="182" stroke="#FF0000" stroke-width="5.3" stroke-linecap="round"/>
<line x1="623.13" y1="158" x2="623.13" y2="182" stroke="#FF0000" stroke-width="5.3" stroke-linecap="round"/>
<line x1="636.4399999999999" y1="129" x2="636.4399999999999" y2="153" stroke="#33CC33" stroke-width="5.3" stroke-linecap="round"/>
<line x1="649.75" y1="129" x2="649.75" y2="153" stroke="#33CC33" stroke-width="5.3" stroke-linecap="round"/>
<line x1="663.06" y1="129" x2="663.06" y2="153" stroke="#33CC33" stroke-width="5.3" stroke-linecap="round"/>
<line x1="676.37" y1="129" x2="676.37" y2="153" stroke="#33CC33" stroke-width="5.3" stroke-linecap="round"/>
<line x1="689.68" y1="129" x2="689.68" y2="153" stroke="#33CC33" stroke-width="5.3" stroke-linecap="round"/>
<line x1="702.99" y1="129" x2="702.99" y2="153" stroke="#33CC33" stroke-width="5.3" stroke-linecap="round"/>
<line x1="716.3" y1="158" x2="716.3" y2="182" stroke="#FF0000" stroke-width="5.3" stroke-linecap="round"/>
<line x1="729.61" y1="158" x2="729.61" y2="182" stroke="#FF0000" stroke-width="5.3" stroke-linecap="round"/>
<line x1="742.92" y1="158" x2="742.92" y2="182" stroke="#FF0000" stroke-width="5.3" stroke-linecap="round"/>
<line x1="756.23" y1="158" x2="756.23" y2="182" stroke="#FF0000" stroke-width="5.3" stroke-linecap="round"/>
<line x1="769.54" y1="158" x2="769.54" y2="182" stroke="#FF0000" stroke-width="5.3" stroke-linecap="round"/>
<line x1="782.85" y1="129" x2="782.85" y2="153" stroke="#33CC33" stroke-width="5.3" stroke-linecap="round"/>
<line x1="796.16" y1="129" x2="796.16" y2="153" stroke="#33CC33" stroke-width="5.3" stroke-linecap="round"/>
<line x1="809.47" y1="129" x2="809.47" y2="153" stroke="#33CC33" stroke-width="5.3" stroke-linecap="round"/>
<line x1="822.78" y1="129" x2="822.78" y2="153" stroke="#33CC33" stroke-width="5.3" stroke-linecap="round"/>
<line x1="836.09" y1="129" x2="836.09" y2="153" stroke="#33CC33" stroke-width="5.3" stroke-linecap="round"/>
<line x1="849.4" y1="129" x2="849.4" y2="153" stroke="#33CC33" stroke-width="5.3" stroke-linecap="round"/>
<line x1="862.71" y1="129" x2="862.71" y2="153" stroke="#33CC33" stroke-width="5.3" stroke-linecap="round"/>
<line x1="876.02" y1="129" x2="876.02" y2="153" stroke="#33CC33" stroke-width="5.3" stroke-linecap="round"/>
<line x1="889.33" y1="129" x2="889.33" y2="153" stroke="#33CC33" stroke-width="5.3" stroke-linecap="round"/>
<line x1="902.64" y1="129" x2="902.64" y2="153" stroke="#33CC33" stroke-width="5.3" stroke-linecap="round"/>
<line x1="915.9499999999999" y1="129" x2="915.9499999999999" y2="153" stroke="#33CC33" stroke-width="5.3" stroke-linecap="round"/>
<line x1="929.26" y1="129" x2="929.26" y2="153" stroke="#33CC33" stroke-width="5.3" stroke-linecap="round"/>
<line x1="942.5699999999999" y1="129" x2="942.5699999999999" y2="153" stroke="#33CC33" stroke-width="5.3" stroke-linecap="round"/>
<line x1="955.88" y1="129" x2="955.88" y2="153" stroke="#33CC33" stroke-width="5.3" stroke-linecap="round"/>
<line x1="969.1899999999999" y1="129" x2="969.1899999999999" y2="153" stroke="#33CC33" stroke-width="5.3" stroke-linecap="round"/>
<line x1="982.5" y1="129" x2="982.5" y2="153" stroke="#33CC33" stroke-width="5.3" stroke-linecap="round"/>
<line x1="995.81" y1="129" x2="995.81" y2="153" stroke="#33CC33" stroke-width="5.3" stroke-linecap="round"/>
<line x1="1009.12" y1="129" x2="1009.12" y2="153" stroke="#33CC33" stroke-width="5.3" stroke-linecap="round"/>
<line x1="1195.46" y1="129" x2="1195.46" y2="153" stroke="#33CC33" stroke-width="5.3" stroke-linecap="round"/>
<line x1="1208.77" y1="129" x2="1208.77" y2="153" stroke="#33CC33" stroke-width="5.3" stroke-linecap="round"/>
<line x1="1222.08" y1="129" x2="1222.08" y2="153" stroke="#33CC33" stroke-width="5.3" stroke-linecap="round"/>
<line x1="1235.39" y1="129" x2="1235.39" y2="153" stroke="#33CC33" stroke-width="5.3" stroke-linecap="round"/>
<line x1="1248.7" y1="129" x2="1248.7" y2="153" stroke="#33CC33" stroke-width="5.3" stroke-linecap="round"/>
<line x1="1262.01" y1="129" x2="1262.01" y2="153" stroke="#33CC33" stroke-width="5.3" stroke-linecap="round"/>
<line x1="1275.32" y1="129" x2="1275.32" y2="153" stroke="#33CC33" stroke-width="5.3" stroke-linecap="round"/>
<line x1="1288.63" y1="129" x2="1288.63" y2="153" stroke="#33CC33" stroke-width="5.3" stroke-linecap="round"/>
<line x1="1301.94" y1="129" x2="1301.94" y2="153" stroke="#33CC33" stroke-width="5.3" stroke-linecap="round"/>
<line x1="1315.25" y1="129" x2="1315.25" y2="153" stroke="#33CC33" stroke-width="5.3" stroke-linecap="round"/>
<line x1="1328.56" y1="129" x2="1328.56" y2="153" stroke="#33CC33" stroke-width="5.3" stroke-linecap="round"/>
<line x1="1341.87" y1="129" x2="1341.87" y2="153" stroke="#33CC33" stroke-width="5.3" stroke-linecap="round"/>
<line x1="1355.18" y1="129" x2="1355.18" y2="153" stroke="#33CC33" stroke-width="5.3" stroke-linecap="round"/>
<line x1="1368.49" y1="129" x2="1368.49" y2="153" stroke="#33CC33" stroke-width="5.3" stroke-linecap="round"/>
<line x1="1381.8" y1="129" x2="1381.8" y2="153" stroke="#33CC33" stroke-width="5.3" stroke-linecap="round"/>
<line x1="44" y1="155.5" x2="1381" y2="155.5" stroke="#FFFF00" stroke-width="6.2" stroke-linecap="round"/>
</g>
<rect x="44" y="220" width="1873" height="122" fill="#000060" />
<rect x="1854" y="220" width="1.5" height="122" fill="#F0F0F0" />
<rect x="1855" y="232.14" width="4.5" height="1.2" fill="#E8E8E8" />
<rect x="1855" y="235.68" width="4.5" height="1.2" fill="#E8E8E8" />
<rect x="1855" y="239.22" width="4.5" height="1.2" fill="#E8E8E8" />
<rect x="1855" y="242.76000000000002" width="4.5" height="1.2" fill="#E8E8E8" />
<rect x="1855" y="249.74" width="4.5" height="1.2" fill="#E8E8E8" />
<rect x="1855" y="253.18" width="4.5" height="1.2" fill="#E8E8E8" />
<rect x="1855" y="256.62" width="4.5" height="1.2" fill="#E8E8E8" />
<rect x="1855" y="260.06" width="4.5" height="1.2" fill="#E8E8E8" />
<rect x="1855" y="266.98" width="4.5" height="1.2" fill="#E8E8E8" />
<rect x="1855" y="270.46" width="4.5" height="1.2" fill="#E8E8E8" />
<rect x="1855" y="273.94" width="4.5" height="1.2" fill="#E8E8E8" />
<rect x="1855" y="277.41999999999996" width="4.5" height="1.2" fill="#E8E8E8" />
<rect x="1855" y="284.15999999999997" width="4.5" height="1.2" fill="#E8E8E8" />
<rect x="1855" y="287.41999999999996" width="4.5" height="1.2" fill="#E8E8E8" />
<rect x="1855" y="290.68" width="4.5" height="1.2" fill="#E8E8E8" />
<rect x="1855" y="293.94" width="4.5" height="1.2" fill="#E8E8E8" />
<rect x="1855" y="300.74" width="4.5" height="1.2" fill="#E8E8E8" />
<rect x="1855" y="304.28" width="4.5" height="1.2" fill="#E8E8E8" />
<rect x="1855" y="307.82" width="4.5" height="1.2" fill="#E8E8E8" />
<rect x="1855" y="311.35999999999996" width="4.5" height="1.2" fill="#E8E8E8" />
<rect x="1855" y="318.4" width="4.5" height="1.2" fill="#E8E8E8" />
<rect x="1855" y="321.9" width="4.5" height="1.2" fill="#E8E8E8" />
<rect x="1855" y="325.4" width="4.5" height="1.2" fill="#E8E8E8" />
<rect x="1855" y="328.9" width="4.5" height="1.2" fill="#E8E8E8" />
<rect x="1855" y="221.70000000000002" width="4.5" height="1.2" fill="#E8E8E8" />
<rect x="1855" y="225.1" width="4.5" height="1.2" fill="#E8E8E8" />
<rect x="1855" y="335.9" width="4.5" height="1.2" fill="#E8E8E8" />
<rect x="1855" y="339.29999999999995" width="4.5" height="1.2" fill="#E8E8E8" />
<rect x="1855" y="228.45" width="10" height="1.5" fill="#F0F0F0" />
<text x="1911.5" y="236.2" font-size="14.5" fill="#F0F0F0" text-anchor="end" font-weight="normal"  >1500</text>
<rect x="1855" y="246.15" width="10" height="1.5" fill="#F0F0F0" />
<text x="1911.5" y="253.9" font-size="14.5" fill="#F0F0F0" text-anchor="end" font-weight="normal"  >1000</text>
<rect x="1855" y="263.35" width="10" height="1.5" fill="#F0F0F0" />
<text x="1911.5" y="271.1" font-size="14.5" fill="#F0F0F0" text-anchor="end" font-weight="normal"  >500</text>
<rect x="1855" y="280.75" width="10" height="1.5" fill="#F0F0F0" />
<text x="1911.5" y="288.5" font-size="14.5" fill="#F0F0F0" text-anchor="end" font-weight="normal"  >0</text>
<rect x="1855" y="297.05" width="10" height="1.5" fill="#F0F0F0" />
<text x="1911.5" y="304.8" font-size="14.5" fill="#F0F0F0" text-anchor="end" font-weight="normal"  >-500</text>
<rect x="1855" y="314.75" width="10" height="1.5" fill="#F0F0F0" />
<text x="1911.5" y="322.5" font-size="14.5" fill="#F0F0F0" text-anchor="end" font-weight="normal"  >-1000</text>
<rect x="1855" y="332.25" width="10" height="1.5" fill="#F0F0F0" />
<text x="1911.5" y="340" font-size="14.5" fill="#F0F0F0" text-anchor="end" font-weight="normal"  >-1500</text>
<rect x="1383" y="281" width="471" height="1.5" fill="#C8C8D8" />
<g clip-path="url(#c2)">
<line x1="78" y1="278.6" x2="131" y2="278.6" stroke="#FF6A28" stroke-width="2.4" />
<line x1="160" y1="278.6" x2="295" y2="278.6" stroke="#FF6A28" stroke-width="2.4" />
<line x1="343.75" y1="277.6" x2="410" y2="277.6" stroke="#FF6A28" stroke-width="2.8" />
<line x1="410" y1="278.6" x2="425" y2="278.6" stroke="#FF6A28" stroke-width="2.4" />
<line x1="587" y1="278.6" x2="960" y2="278.6" stroke="#FF6A28" stroke-width="2.4" />
<line x1="960" y1="277.8" x2="985" y2="277.8" stroke="#FF6A28" stroke-width="3.2" />
<line x1="985" y1="278.2" x2="1115" y2="278.2" stroke="#FF6A28" stroke-width="2.8" />
<line x1="1115" y1="278.4" x2="1383" y2="278.4" stroke="#FF6A28" stroke-width="2.2" />
<line x1="44" y1="279.9" x2="78" y2="279.9" stroke="#FFFFFF" stroke-width="1.4" stroke-dasharray="4,3"/>
<line x1="131" y1="279.9" x2="160" y2="279.9" stroke="#FFFFFF" stroke-width="1.4" stroke-dasharray="4,3"/>
<line x1="295" y1="279.9" x2="345" y2="279.9" stroke="#FFFFFF" stroke-width="1.4" stroke-dasharray="4,3"/>
<line x1="425" y1="279.9" x2="587" y2="279.9" stroke="#FFFFFF" stroke-width="1.4" stroke-dasharray="4,3"/>
<line x1="960" y1="279.9" x2="1383" y2="279.9" stroke="#FFFFFF" stroke-width="1.4" stroke-dasharray="4,3"/>
<polyline points="44.0,332.0 64.1,332.0 77.4,332.0 90.7,332.0 104.0,229.0 117.3,229.0 130.7,229.0 144.0,332.0 157.3,332.0 170.6,332.0 183.9,332.0 197.2,332.0 210.5,332.0 223.8,332.0 237.1,332.0 250.4,332.0 263.8,332.0 277.1,332.0 290.4,332.0 303.7,229.0 317.0,229.0 330.3,229.0 343.6,229.0 356.9,229.0 370.2,229.0 383.6,229.0 396.9,229.0 410.2,229.0 423.5,229.0 436.8,332.0 450.1,332.0 463.4,332.0 476.7,332.0 490.0,332.0 503.3,332.0 516.6,332.0 530.0,332.0 543.3,332.0 556.6,332.0 569.9,332.0 583.2,332.0 596.5,332.0 609.8,332.0 623.1,332.0 636.4,229.0 649.8,229.0 663.1,229.0 676.4,229.0 689.7,229.0 703.0,229.0 716.3,332.0 729.6,332.0 742.9,332.0 756.2,332.0 769.5,332.0 782.9,229.0 796.2,229.0 809.5,229.0 822.8,229.0 836.1,229.0 849.4,229.0 862.7,229.0 876.0,229.0 889.3,229.0 902.6,229.0 915.9,229.0 929.3,229.0 942.6,229.0 955.9,229.0 969.2,229.0 982.5,229.0 995.8,229.0 1009.1,229.0 1022.4,229.0 1035.7,229.0 1049.0,229.0 1062.4,229.0 1075.7,229.0 1089.0,229.0 1102.3,229.0 1115.6,229.0 1128.9,229.0 1142.2,229.0 1155.5,229.0 1168.8,229.0 1182.2,229.0 1195.5,229.0 1208.8,229.0 1222.1,229.0 1235.4,229.0 1248.7,229.0 1262.0,229.0 1275.3,229.0 1288.6,229.0 1301.9,229.0 1315.2,229.0 1328.6,229.0 1341.9,229.0 1355.2,229.0 1368.5,229.0 1381.8,229.0 1383.5,229.0" fill="none" stroke="#90D0E4" stroke-width="4.2" stroke-linejoin="round"/>
<polyline points="44.0,281.7 50.8,281.7 64.1,281.7 77.4,281.7 90.7,281.7 104.0,281.7 117.3,281.7 130.7,281.7 144.0,281.7 157.3,281.7 170.6,281.7 183.9,281.7 197.2,281.7 210.5,281.7 223.8,281.7 237.1,281.7 250.4,281.7 263.8,281.7 277.1,281.7 290.4,281.7 303.7,281.7 317.0,281.7 330.3,281.7 343.6,281.7 356.9,281.7 370.2,281.7 383.6,281.7 396.9,281.7 410.2,281.7 423.5,281.7 436.8,281.7 450.1,281.7 463.4,281.7 476.7,281.7 490.0,281.7 503.3,281.7 516.6,281.7 530.0,305.5 543.3,281.7 556.6,281.7 569.9,281.7 583.2,281.7 596.5,281.7 609.8,281.7 623.1,281.7 636.4,281.7 649.8,281.7 663.1,281.7 676.4,281.7 689.7,256.0 703.0,281.7 716.3,281.7 729.6,281.7 742.9,281.7 756.2,281.7 769.5,281.7 782.9,281.7 796.2,281.7 809.5,281.7 822.8,281.7 836.1,281.7 849.4,281.7 862.7,281.7 876.0,281.7 889.3,281.7 902.6,281.7 915.9,281.7 929.3,281.7 942.6,256.0 955.9,281.7 969.2,281.7 982.5,281.7 995.8,281.7 1009.1,281.7 1022.4,315.0 1035.7,281.7 1049.0,281.7 1062.4,281.7 1075.7,316.0 1089.0,316.0 1102.3,316.0 1115.6,281.7 1128.9,281.7 1142.2,281.7 1155.5,281.7 1168.8,281.7 1182.2,281.7 1195.5,256.0 1208.8,281.7 1222.1,281.7 1235.4,281.7 1248.7,281.7 1262.0,281.7 1275.3,281.7 1288.6,281.7 1301.9,281.7 1315.2,281.7 1328.6,281.7 1341.9,281.7 1355.2,281.7 1368.5,256.0 1381.8,281.7 1383.5,281.7" fill="none" stroke="#90D0E4" stroke-width="3.8" stroke-linejoin="miter"/>
</g>
<line x1="1369" y1="156" x2="1369" y2="186" stroke="#33CC33" stroke-width="1.3" stroke-dasharray="5,4"/>
<line x1="1369" y1="220" x2="1369" y2="342" stroke="#33CC33" stroke-width="1.3" stroke-dasharray="5,4"/>
<rect x="44" y="375" width="1873" height="175.5" fill="#808080" />
<rect x="1854" y="375" width="1.5" height="175.5" fill="#F0F0F0" />
<rect x="1855" y="543.15" width="4.5" height="1.5" fill="#F0F0F0" />
<rect x="1855" y="529.25" width="10" height="1.5" fill="#F0F0F0" />
<rect x="1855" y="515.35" width="4.5" height="1.5" fill="#F0F0F0" />
<rect x="1855" y="501.45" width="4.5" height="1.5" fill="#F0F0F0" />
<rect x="1855" y="487.55" width="4.5" height="1.5" fill="#F0F0F0" />
<rect x="1855" y="473.65" width="4.5" height="1.5" fill="#F0F0F0" />
<rect x="1855" y="459.75" width="10" height="1.5" fill="#F0F0F0" />
<rect x="1855" y="445.85" width="4.5" height="1.5" fill="#F0F0F0" />
<rect x="1855" y="431.95" width="4.5" height="1.5" fill="#F0F0F0" />
<rect x="1855" y="418.05" width="4.5" height="1.5" fill="#F0F0F0" />
<rect x="1855" y="404.15" width="4.5" height="1.5" fill="#F0F0F0" />
<rect x="1855" y="390.25" width="10" height="1.5" fill="#F0F0F0" />
<rect x="1855" y="376.35" width="4.5" height="1.5" fill="#F0F0F0" />
<text x="1911.5" y="397.5" font-size="14.5" fill="#F0F0F0" text-anchor="end" font-weight="normal"  >50</text>
<text x="1911.5" y="467.5" font-size="14.5" fill="#F0F0F0" text-anchor="end" font-weight="normal"  >0</text>
<text x="1911.5" y="536.5" font-size="14.5" fill="#F0F0F0" text-anchor="end" font-weight="normal"  >-50</text>
<line x1="44" y1="418" x2="1854" y2="418" stroke="#222222" stroke-width="1.6" stroke-dasharray="4.5,3.5"/>
<line x1="44" y1="446.7" x2="1854" y2="446.7" stroke="#222222" stroke-width="1.6" stroke-dasharray="4.5,3.5"/>
<line x1="44" y1="474.2" x2="1854" y2="474.2" stroke="#222222" stroke-width="1.6" stroke-dasharray="4.5,3.5"/>
<line x1="44" y1="501.7" x2="1854" y2="501.7" stroke="#222222" stroke-width="1.6" stroke-dasharray="4.5,3.5"/>
<g clip-path="url(#c3)">
<polyline points="43.2,465.0 56.2,463.3 67.6,461.7 75.7,457.7 85.4,455.5 116.2,455.5 130.8,461.7 143.7,467.4 156.7,472.2 166.4,473.9 189.1,473.9 200.5,471.4 211.8,466.6 226.4,464.1 239.4,462.5 250.7,461.7 263.7,457.7 280.0,450.4 286.2,449.6 302.4,447.1 323.5,445.8 347.8,445.8 367.2,447.9 389.9,446.3 409.4,444.2 422.4,454.4 432.1,465.0 441.8,473.1 451.5,477.9 466.1,479.5 474.2,475.5 487.2,472.2 500.0,473.9 519.4,474.7 540.5,479.5 555.1,481.2 568.1,477.1 584.3,469.0 600.5,465.8 616.7,462.5 634.5,458.0 649.1,456.8 670.2,459.3 694.5,460.1 707.5,463.3 726.9,469.0 740.0,470.6 755.9,473.1 765.7,470.6 781.9,461.7 798.1,452.0 807.8,448.7 820.8,448.7 846.7,452.8 866.1,451.2 885.6,447.1 905.0,442.3 914.8,441.5 927.7,444.7 940.7,433.3 955.3,422.8 969.7,418.0 982.7,417.1 995.7,422.0 1015.1,427.7 1036.2,437.4 1054.0,440.6 1083.2,443.9 1102.6,446.3 1117.2,452.8 1130.2,461.7 1146.4,469.0 1156.1,470.6 1167.5,469.0 1180.4,464.1 1190.0,463.3 1207.8,458.0 1219.2,455.5 1241.9,455.5 1259.7,450.4 1277.5,450.4 1290.5,453.6 1301.8,460.1 1313.2,463.3 1324.5,460.1 1335.9,460.9 1360.2,460.9 1381.2,460.9" fill="none" stroke="#F0F0D0" stroke-width="1.5" stroke-linejoin="round"/>
<polyline points="43.2,461.7 49.7,463.3 56.2,461.7 64.3,462.5 67.2,461.7 78.9,465.8 88.6,463.3 103.2,465.8 111.3,461.7 117.8,456.8 127.5,455.2 159.9,455.2 169.7,457.7 185.9,458.0 195.6,460.1 210.2,462.5 234.5,463.3 247.5,465.8 331.6,465.4 342.9,465.8 355.9,460.1 370.5,458.0 381.8,461.7 396.4,465.4 411.0,465.4 422.4,455.5 449.9,454.4 464.5,458.5 488.8,459.3 500.0,458.5 516.2,457.7 529.2,454.4 558.3,454.4 569.7,460.1 590.8,464.1 603.7,465.8 637.8,465.8 649.1,460.9 662.1,460.1 689.6,458.0 701.0,455.2 730.0,459.6 757.6,455.2 768.9,460.9 781.9,465.8 811.0,465.8 820.8,463.3 843.5,462.5 875.9,463.3 887.2,465.8 916.4,465.8 929.4,457.7 942.3,463.3 982.7,465.8 992.4,463.3 1003.8,464.1 1024.8,459.3 1035.4,454.1 1044.3,458.5 1065.3,461.7 1089.7,463.3 1105.9,460.9 1115.6,454.4 1143.1,454.4 1157.7,458.5 1169.1,456.8 1180.4,462.5 1238.6,463.3 1246.7,465.8 1262.9,465.8 1274.3,461.7 1287.2,460.1 1301.8,454.4 1316.4,457.7 1332.6,459.3 1352.1,459.3 1361.8,460.9 1381.2,463.3" fill="none" stroke="#F8F000" stroke-width="1.5" stroke-linejoin="round"/>
<polyline points="44.0,459.6 170.6,459.6 183.9,433.7 197.2,459.6 330.3,459.6 343.6,485.2 356.9,459.6 410.2,459.6 423.5,486.8 436.8,459.6 463.4,459.6 476.7,435.8 490.0,459.6 503.3,459.6 516.6,446.3 530.0,459.6 556.6,459.6 569.9,433.3 583.2,459.6 649.8,459.6 663.1,465.8 676.4,463.0 689.7,453.0 703.0,459.6 756.2,459.6 769.5,452.8 782.9,459.6 809.5,459.6 822.8,472.2 836.1,459.6 915.9,459.6 929.3,487.6 942.6,459.6 982.5,459.6 995.8,486.8 1009.1,459.6 1075.7,459.6 1089.0,465.8 1102.3,459.6 1155.5,459.6 1168.8,453.6 1182.2,459.6 1275.3,459.6 1288.6,465.8 1301.9,459.6 1315.2,459.6 1328.6,453.6 1341.9,459.6 1355.2,459.6 1368.5,452.8 1381.8,459.6" fill="none" stroke="#000000" stroke-width="2.2" stroke-linejoin="miter"/>
<polyline points="44.0,453.1 170.6,453.1 183.9,425.6 330.3,425.6 343.6,487.6 410.2,487.6 423.5,515.7 463.4,515.7 476.7,433.0 503.3,433.0 516.6,418.0 556.6,418.0 569.9,390.4 649.8,390.4 663.1,466.6 676.4,466.6 689.7,453.1 756.2,453.1 769.5,446.3 809.5,446.3 822.8,474.2 915.9,474.2 929.3,501.7 982.5,501.7 995.8,529.0 1075.7,529.0 1089.0,536.3 1155.5,536.3 1168.8,453.1 1275.3,453.1 1288.6,467.0 1315.2,467.0 1328.6,453.1 1355.2,453.1 1368.5,446.3 1381.8,446.3" fill="none" stroke="#900000" stroke-width="4.6" stroke-linejoin="round"/>
</g>
<circle cx="1368.3" cy="447" r="12.3" fill="none" stroke="#33CC33" stroke-width="2"/>
<line x1="1369" y1="375" x2="1369" y2="550.5" stroke="#33CC33" stroke-width="1.3" stroke-dasharray="5,4"/>
<rect x="44" y="584.5" width="1873" height="340.5" fill="#000000" />
<rect x="1854" y="585" width="1.5" height="281" fill="#F0F0F0" />
<rect x="1855" y="594.53" width="4.5" height="1.5" fill="#F0F0F0" />
<rect x="1855" y="604.25" width="10" height="1.5" fill="#F0F0F0" />
<rect x="1855" y="613.97" width="4.5" height="1.5" fill="#F0F0F0" />
<rect x="1855" y="623.69" width="4.5" height="1.5" fill="#F0F0F0" />
<rect x="1855" y="633.41" width="4.5" height="1.5" fill="#F0F0F0" />
<rect x="1855" y="643.13" width="4.5" height="1.5" fill="#F0F0F0" />
<rect x="1855" y="652.85" width="10" height="1.5" fill="#F0F0F0" />
<rect x="1855" y="662.57" width="4.5" height="1.5" fill="#F0F0F0" />
<rect x="1855" y="672.29" width="4.5" height="1.5" fill="#F0F0F0" />
<rect x="1855" y="682.01" width="4.5" height="1.5" fill="#F0F0F0" />
<rect x="1855" y="691.73" width="4.5" height="1.5" fill="#F0F0F0" />
<rect x="1855" y="701.45" width="10" height="1.5" fill="#F0F0F0" />
<rect x="1855" y="711.17" width="4.5" height="1.5" fill="#F0F0F0" />
<rect x="1855" y="720.89" width="4.5" height="1.5" fill="#F0F0F0" />
<rect x="1855" y="730.61" width="4.5" height="1.5" fill="#F0F0F0" />
<rect x="1855" y="740.33" width="4.5" height="1.5" fill="#F0F0F0" />
<rect x="1855" y="750.05" width="10" height="1.5" fill="#F0F0F0" />
<rect x="1855" y="759.77" width="4.5" height="1.5" fill="#F0F0F0" />
<rect x="1855" y="769.49" width="4.5" height="1.5" fill="#F0F0F0" />
<rect x="1855" y="779.21" width="4.5" height="1.5" fill="#F0F0F0" />
<rect x="1855" y="788.9300000000001" width="4.5" height="1.5" fill="#F0F0F0" />
<rect x="1855" y="798.65" width="10" height="1.5" fill="#F0F0F0" />
<rect x="1855" y="808.37" width="4.5" height="1.5" fill="#F0F0F0" />
<rect x="1855" y="818.09" width="4.5" height="1.5" fill="#F0F0F0" />
<rect x="1855" y="827.81" width="4.5" height="1.5" fill="#F0F0F0" />
<rect x="1855" y="837.53" width="4.5" height="1.5" fill="#F0F0F0" />
<rect x="1855" y="847.25" width="10" height="1.5" fill="#F0F0F0" />
<rect x="1855" y="856.97" width="4.5" height="1.5" fill="#F0F0F0" />
<rect x="1855" y="585.2" width="10" height="1.5" fill="#F0F0F0" />
<text x="1912.5" y="612.5" font-size="15.5" fill="#F0F0F0" text-anchor="end" font-weight="normal"  >380</text>
<text x="1912.5" y="709.7" font-size="15.5" fill="#F0F0F0" text-anchor="end" font-weight="normal"  >370</text>
<text x="1912.5" y="758.3" font-size="15.5" fill="#F0F0F0" text-anchor="end" font-weight="normal"  >365</text>
<text x="1912.5" y="806.9" font-size="15.5" fill="#F0F0F0" text-anchor="end" font-weight="normal"  >360</text>
<text x="1912.5" y="855.5" font-size="15.5" fill="#F0F0F0" text-anchor="end" font-weight="normal"  >355</text>
<text x="1912.5" y="661.1" font-size="15.5" fill="#F0F0F0" text-anchor="end" font-weight="normal"  >375</text>
<rect x="1859.5" y="636.5" width="60" height="20.5" fill="#000000" stroke="#D8D8D8" stroke-width="1"/>
<text x="1861.5" y="651.5" font-size="14" fill="#F01010" text-anchor="start" font-weight="normal" textLength="56" lengthAdjust="spacingAndGlyphs" >375.6600</text>
<rect x="44" y="865" width="52.599999999999994" height="19" fill="url(#hr)" />
<rect x="96.6" y="865" width="40.0" height="19" fill="url(#hg)" />
<rect x="136.6" y="865" width="159.79999999999998" height="19" fill="url(#hr)" />
<rect x="296.4" y="865" width="133.20000000000005" height="19" fill="url(#hg)" />
<rect x="429.6" y="865" width="199.79999999999995" height="19" fill="url(#hr)" />
<rect x="629.4" y="865" width="79.89999999999998" height="19" fill="url(#hg)" />
<rect x="709.3" y="865" width="66.60000000000002" height="19" fill="url(#hr)" />
<rect x="775.9" y="865" width="239.80000000000007" height="19" fill="url(#hg)" />
<rect x="1189" y="865" width="206" height="19" fill="url(#hg)" />
<rect x="1017" y="870" width="170" height="1.6" fill="#F0E000" />
<rect x="1017" y="880" width="170" height="1.6" fill="#F0E000" />
<circle cx="68.5" cy="871" r="7" fill="none" stroke="#1010D0" stroke-width="1.5"/>
<path d="M64.5,875 q4,-4 8,0" fill="none" stroke="#1010D0" stroke-width="1.2"/>
<circle cx="115" cy="871" r="7" fill="none" stroke="#1010D0" stroke-width="1.5"/>
<path d="M111,873 q4,4 8,0" fill="none" stroke="#1010D0" stroke-width="1.2"/>
<circle cx="215" cy="871" r="7" fill="none" stroke="#1010D0" stroke-width="1.5"/>
<path d="M211,875 q4,-4 8,0" fill="none" stroke="#1010D0" stroke-width="1.2"/>
<circle cx="361" cy="871" r="7" fill="none" stroke="#1010D0" stroke-width="1.5"/>
<path d="M357,873 q4,4 8,0" fill="none" stroke="#1010D0" stroke-width="1.2"/>
<circle cx="527.5" cy="871" r="7" fill="none" stroke="#1010D0" stroke-width="1.5"/>
<path d="M523.5,875 q4,-4 8,0" fill="none" stroke="#1010D0" stroke-width="1.2"/>
<circle cx="667.5" cy="871" r="7" fill="none" stroke="#1010D0" stroke-width="1.5"/>
<path d="M663.5,873 q4,4 8,0" fill="none" stroke="#1010D0" stroke-width="1.2"/>
<circle cx="740" cy="871" r="7" fill="none" stroke="#1010D0" stroke-width="1.5"/>
<path d="M736,875 q4,-4 8,0" fill="none" stroke="#1010D0" stroke-width="1.2"/>
<circle cx="893" cy="871" r="7" fill="none" stroke="#1010D0" stroke-width="1.5"/>
<path d="M889,873 q4,4 8,0" fill="none" stroke="#1010D0" stroke-width="1.2"/>
<circle cx="1100" cy="871" r="7" fill="none" stroke="#1010D0" stroke-width="1.5"/>
<path d="M1096,873 q4,4 8,0" fill="none" stroke="#1010D0" stroke-width="1.2"/>
<circle cx="1290" cy="871" r="7" fill="none" stroke="#1010D0" stroke-width="1.5"/>
<path d="M1286,873 q4,4 8,0" fill="none" stroke="#1010D0" stroke-width="1.2"/>
<g clip-path="url(#c4)">
<rect x="50.1" y="738.9" width="1.8" height="13.899999999999977" fill="#FF6A1A" />
<rect x="45.8" y="744.4" width="10.4" height="2.4" fill="#FF6A1A" />
<rect x="63.1" y="732.2" width="1.8" height="28.399999999999977" fill="#FF6A1A" />
<rect x="58.8" y="746.1" width="10.4" height="11.100000000000023" fill="#FF6A1A" />
<rect x="76.1" y="698.3" width="1.8" height="19.5" fill="#8299BA" />
<rect x="76.1" y="722.2" width="1.8" height="2.199999999999932" fill="#8299BA" />
<rect x="72.6" y="718.5999999999999" width="8.8" height="2.8" fill="none" stroke="#8299BA" stroke-width="1.6"/>
<rect x="90.1" y="715.0" width="1.8" height="25.600000000000023" fill="#FF6A1A" />
<rect x="85.8" y="717.8" width="10.4" height="14.400000000000091" fill="#FF6A1A" />
<rect x="103.1" y="712.2" width="1.8" height="6.699999999999932" fill="#8299BA" />
<rect x="103.1" y="733.3" width="1.8" height="0" fill="#8299BA" />
<rect x="99.6" y="719.6999999999999" width="8.8" height="12.8" fill="none" stroke="#8299BA" stroke-width="1.6"/>
<rect x="116.1" y="716.1" width="1.8" height="36.10000000000002" fill="#FF6A1A" />
<rect x="111.8" y="718.9" width="10.4" height="31.100000000000023" fill="#FF6A1A" />
<rect x="130.1" y="741.1" width="1.8" height="18.299999999999955" fill="#FF6A1A" />
<rect x="125.8" y="750.0" width="10.4" height="9.399999999999977" fill="#FF6A1A" />
<rect x="143.1" y="758.9" width="1.8" height="28.300000000000068" fill="#FF6A1A" />
<rect x="138.8" y="760.0" width="10.4" height="17.200000000000045" fill="#FF6A1A" />
<rect x="156.1" y="768.9" width="1.8" height="3.8999999999999773" fill="#8299BA" />
<rect x="156.1" y="778.3" width="1.8" height="5.0" fill="#8299BA" />
<rect x="152.6" y="773.5999999999999" width="8.8" height="3.9" fill="none" stroke="#8299BA" stroke-width="1.6"/>
<rect x="170.1" y="772.8" width="1.8" height="11.600000000000023" fill="#FF6A1A" />
<rect x="165.8" y="772.8" width="10.4" height="7.800000000000068" fill="#FF6A1A" />
<rect x="183.1" y="776.7" width="1.8" height="12.699999999999932" fill="#FF6A1A" />
<rect x="178.8" y="780.5" width="10.4" height="2.4" fill="#FF6A1A" />
<rect x="196.1" y="774.4" width="1.8" height="3.3999999999999773" fill="#8299BA" />
<rect x="196.1" y="783.3" width="1.8" height="2.300000000000068" fill="#8299BA" />
<rect x="192.6" y="778.5999999999999" width="8.8" height="3.9" fill="none" stroke="#8299BA" stroke-width="1.6"/>
<rect x="210.1" y="755.6" width="1.8" height="5.0" fill="#8299BA" />
<rect x="210.1" y="778.3" width="1.8" height="3.900000000000091" fill="#8299BA" />
<rect x="206.6" y="761.4" width="8.8" height="16.1" fill="none" stroke="#8299BA" stroke-width="1.6"/>
<rect x="223.1" y="760.0" width="1.8" height="12.200000000000045" fill="#FF6A1A" />
<rect x="218.8" y="760.0" width="10.4" height="8.299999999999955" fill="#FF6A1A" />
<rect x="236.1" y="761.0" width="1.8" height="5.7000000000000455" fill="#8299BA" />
<rect x="236.1" y="769.4" width="1.8" height="8.899999999999977" fill="#8299BA" />
<rect x="232.6" y="767.5" width="8.8" height="1.1" fill="none" stroke="#8299BA" stroke-width="1.6"/>
<rect x="249.1" y="751.7" width="1.8" height="21.59999999999991" fill="#8299BA" />
<rect x="244.8" y="755.5" width="10.4" height="2.4" fill="#8299BA" />
<rect x="263.1" y="736.7" width="1.8" height="0" fill="#8299BA" />
<rect x="263.1" y="758.3" width="1.8" height="10.0" fill="#8299BA" />
<rect x="259.6" y="737.5" width="8.8" height="20.0" fill="none" stroke="#8299BA" stroke-width="1.6"/>
<rect x="276.1" y="726.7" width="1.8" height="14.399999999999977" fill="#8299BA" />
<rect x="271.8" y="734.9" width="10.4" height="2.4" fill="#8299BA" />
<rect x="289.1" y="718.9" width="1.8" height="10.5" fill="#8299BA" />
<rect x="289.1" y="735.6" width="1.8" height="2.699999999999932" fill="#8299BA" />
<rect x="285.6" y="730.1999999999999" width="8.8" height="4.6" fill="none" stroke="#8299BA" stroke-width="1.6"/>
<rect x="303.1" y="716.7" width="1.8" height="2.699999999999932" fill="#8299BA" />
<rect x="303.1" y="729.4" width="1.8" height="5.0" fill="#8299BA" />
<rect x="299.6" y="720.1999999999999" width="8.8" height="8.4" fill="none" stroke="#8299BA" stroke-width="1.6"/>
<rect x="316.1" y="706.7" width="1.8" height="12.699999999999932" fill="#8299BA" />
<rect x="311.8" y="716.0" width="10.4" height="2.4" fill="#8299BA" />
<rect x="329.1" y="708.9" width="1.8" height="3.8999999999999773" fill="#8299BA" />
<rect x="329.1" y="717.8" width="1.8" height="1.6000000000000227" fill="#8299BA" />
<rect x="325.6" y="713.5999999999999" width="8.8" height="3.4" fill="none" stroke="#8299BA" stroke-width="1.6"/>
<rect x="343.1" y="701.1" width="1.8" height="8.899999999999977" fill="#8299BA" />
<rect x="343.1" y="713.3" width="1.8" height="3.900000000000091" fill="#8299BA" />
<rect x="339.6" y="710.8" width="8.8" height="1.7" fill="none" stroke="#8299BA" stroke-width="1.6"/>
<rect x="356.1" y="706.7" width="1.8" height="11.599999999999909" fill="#FF6A1A" />
<rect x="351.8" y="708.9" width="10.4" height="5.5" fill="#FF6A1A" />
<rect x="369.1" y="710.0" width="1.8" height="2.7999999999999545" fill="#8299BA" />
<rect x="369.1" y="715.6" width="1.8" height="2.199999999999932" fill="#8299BA" />
<rect x="365.6" y="713.5999999999999" width="8.8" height="1.2" fill="none" stroke="#8299BA" stroke-width="1.6"/>
<rect x="383.1" y="704.4" width="1.8" height="3.8999999999999773" fill="#8299BA" />
<rect x="383.1" y="713.3" width="1.8" height="0" fill="#8299BA" />
<rect x="379.6" y="709.0999999999999" width="8.8" height="3.4" fill="none" stroke="#8299BA" stroke-width="1.6"/>
<rect x="396.1" y="691.7" width="1.8" height="2.699999999999932" fill="#8299BA" />
<rect x="396.1" y="708.3" width="1.8" height="0" fill="#8299BA" />
<rect x="392.6" y="695.1999999999999" width="8.8" height="12.3" fill="none" stroke="#8299BA" stroke-width="1.6"/>
<rect x="409.1" y="680.0" width="1.8" height="17.200000000000045" fill="#FF6A1A" />
<rect x="404.8" y="693.9" width="10.4" height="3.300000000000068" fill="#FF6A1A" />
<rect x="422.1" y="730.0" width="1.8" height="42.200000000000045" fill="#FF6A1A" />
<rect x="417.8" y="732.2" width="10.4" height="36.69999999999993" fill="#FF6A1A" />
<rect x="436.1" y="766.1" width="1.8" height="27.799999999999955" fill="#FF6A1A" />
<rect x="431.8" y="768.9" width="10.4" height="12.200000000000045" fill="#FF6A1A" />
<rect x="449.1" y="770.0" width="1.8" height="4.399999999999977" fill="#8299BA" />
<rect x="449.1" y="781.7" width="1.8" height="11.099999999999909" fill="#8299BA" />
<rect x="445.6" y="775.1999999999999" width="8.8" height="5.7" fill="none" stroke="#8299BA" stroke-width="1.6"/>
<rect x="462.1" y="761.1" width="1.8" height="17.799999999999955" fill="#8299BA" />
<rect x="457.8" y="772.6999999999999" width="10.4" height="2.4" fill="#8299BA" />
<rect x="476.1" y="753.9" width="1.8" height="6.7000000000000455" fill="#8299BA" />
<rect x="476.1" y="773.3" width="1.8" height="2.800000000000068" fill="#8299BA" />
<rect x="472.6" y="761.4" width="8.8" height="11.1" fill="none" stroke="#8299BA" stroke-width="1.6"/>
<rect x="489.1" y="756.1" width="1.8" height="18.899999999999977" fill="#FF6A1A" />
<rect x="484.8" y="760.0" width="10.4" height="11.100000000000023" fill="#FF6A1A" />
<rect x="502.1" y="766.1" width="1.8" height="12.199999999999932" fill="#FF6A1A" />
<rect x="497.8" y="771.1" width="10.4" height="6.100000000000023" fill="#FF6A1A" />
<rect x="516.1" y="776.1" width="1.8" height="8.899999999999977" fill="#FF6A1A" />
<rect x="511.8" y="777.2" width="10.4" height="5.0" fill="#FF6A1A" />
<rect x="529.1" y="775.0" width="1.8" height="19.399999999999977" fill="#FF6A1A" />
<rect x="524.8" y="782.2" width="10.4" height="12.199999999999932" fill="#FF6A1A" />
<rect x="542.1" y="789.4" width="1.8" height="13.399999999999977" fill="#8299BA" />
<rect x="537.8" y="792.0999999999999" width="10.4" height="2.4" fill="#8299BA" />
<rect x="556.1" y="783.9" width="1.8" height="15.5" fill="#FF6A1A" />
<rect x="551.8" y="792.2" width="10.4" height="7.199999999999932" fill="#FF6A1A" />
<rect x="569.1" y="780.0" width="1.8" height="7.7999999999999545" fill="#8299BA" />
<rect x="569.1" y="800.6" width="1.8" height="0" fill="#8299BA" />
<rect x="565.6" y="788.5999999999999" width="8.8" height="11.2" fill="none" stroke="#8299BA" stroke-width="1.6"/>
<rect x="582.1" y="767.2" width="1.8" height="5.599999999999909" fill="#8299BA" />
<rect x="582.1" y="788.3" width="1.8" height="0" fill="#8299BA" />
<rect x="578.6" y="773.5999999999999" width="8.8" height="13.9" fill="none" stroke="#8299BA" stroke-width="1.6"/>
<rect x="596.1" y="763.3" width="1.8" height="6.100000000000023" fill="#8299BA" />
<rect x="596.1" y="781.7" width="1.8" height="16.09999999999991" fill="#8299BA" />
<rect x="592.6" y="770.1999999999999" width="8.8" height="10.7" fill="none" stroke="#8299BA" stroke-width="1.6"/>
<rect x="609.1" y="765.0" width="1.8" height="18.899999999999977" fill="#FF6A1A" />
<rect x="604.8" y="768.1999999999999" width="10.4" height="2.4" fill="#FF6A1A" />
<rect x="622.1" y="753.9" width="1.8" height="5.0" fill="#8299BA" />
<rect x="622.1" y="771.1" width="1.8" height="0" fill="#8299BA" />
<rect x="618.6" y="759.6999999999999" width="8.8" height="10.6" fill="none" stroke="#8299BA" stroke-width="1.6"/>
<rect x="635.1" y="741.1" width="1.8" height="6.699999999999932" fill="#8299BA" />
<rect x="635.1" y="759.4" width="1.8" height="5.0" fill="#8299BA" />
<rect x="631.6" y="748.5999999999999" width="8.8" height="10.0" fill="none" stroke="#8299BA" stroke-width="1.6"/>
<rect x="649.1" y="745.0" width="1.8" height="27.200000000000045" fill="#FF6A1A" />
<rect x="644.8" y="747.2" width="10.4" height="22.799999999999955" fill="#FF6A1A" />
<rect x="662.1" y="770.6" width="1.8" height="10.5" fill="#FF6A1A" />
<rect x="657.8" y="770.6" width="10.4" height="3.7999999999999545" fill="#FF6A1A" />
<rect x="675.1" y="767.2" width="1.8" height="7.199999999999932" fill="#8299BA" />
<rect x="670.8" y="773.1999999999999" width="10.4" height="2.4" fill="#8299BA" />
<rect x="689.1" y="770.6" width="1.8" height="9.399999999999977" fill="#8299BA" />
<rect x="684.8" y="772.6999999999999" width="10.4" height="2.4" fill="#8299BA" />
<rect x="702.1" y="771.7" width="1.8" height="20.5" fill="#FF6A1A" />
<rect x="697.8" y="772.8" width="10.4" height="16.600000000000023" fill="#FF6A1A" />
<rect x="715.1" y="782.8" width="1.8" height="13.300000000000068" fill="#FF6A1A" />
<rect x="710.8" y="789.4" width="10.4" height="2.4" fill="#FF6A1A" />
<rect x="729.1" y="787.2" width="1.8" height="20.0" fill="#FF6A1A" />
<rect x="724.8" y="792.2" width="10.4" height="13.899999999999977" fill="#FF6A1A" />
<rect x="742.1" y="791.1" width="1.8" height="8.299999999999955" fill="#8299BA" />
<rect x="742.1" y="806.7" width="1.8" height="2.199999999999932" fill="#8299BA" />
<rect x="738.6" y="800.1999999999999" width="8.8" height="5.7" fill="none" stroke="#8299BA" stroke-width="1.6"/>
<rect x="755.1" y="792.2" width="1.8" height="35.0" fill="#FF6A1A" />
<rect x="750.8" y="798.9" width="10.4" height="27.200000000000045" fill="#FF6A1A" />
<rect x="769.1" y="783.9" width="1.8" height="23.899999999999977" fill="#8299BA" />
<rect x="764.8" y="789.4" width="10.4" height="2.4" fill="#8299BA" />
<rect x="782.1" y="752.8" width="1.8" height="5.0" fill="#8299BA" />
<rect x="782.1" y="794.4" width="1.8" height="0" fill="#8299BA" />
<rect x="778.6" y="758.5999999999999" width="8.8" height="35.0" fill="none" stroke="#8299BA" stroke-width="1.6"/>
<rect x="795.1" y="751.1" width="1.8" height="10.0" fill="#FF6A1A" />
<rect x="790.8" y="755.5" width="10.4" height="2.4" fill="#FF6A1A" />
<rect x="808.1" y="746.1" width="1.8" height="5.600000000000023" fill="#8299BA" />
<rect x="808.1" y="758.3" width="1.8" height="0" fill="#8299BA" />
<rect x="804.6" y="752.5" width="8.8" height="5.0" fill="none" stroke="#8299BA" stroke-width="1.6"/>
<rect x="822.1" y="748.9" width="1.8" height="17.200000000000045" fill="#FF6A1A" />
<rect x="817.8" y="751.1" width="10.4" height="11.100000000000023" fill="#FF6A1A" />
<rect x="835.1" y="751.1" width="1.8" height="12.199999999999932" fill="#FF6A1A" />
<rect x="830.8" y="760.5" width="10.4" height="2.4" fill="#FF6A1A" />
<rect x="848.1" y="757.8" width="1.8" height="0" fill="#8299BA" />
<rect x="848.1" y="763.3" width="1.8" height="2.800000000000068" fill="#8299BA" />
<rect x="844.6" y="758.5999999999999" width="8.8" height="3.9" fill="none" stroke="#8299BA" stroke-width="1.6"/>
<rect x="862.1" y="743.9" width="1.8" height="3.8999999999999773" fill="#8299BA" />
<rect x="862.1" y="758.3" width="1.8" height="0" fill="#8299BA" />
<rect x="858.6" y="748.5999999999999" width="8.8" height="8.9" fill="none" stroke="#8299BA" stroke-width="1.6"/>
<rect x="875.1" y="738.9" width="1.8" height="5.5" fill="#8299BA" />
<rect x="875.1" y="748.3" width="1.8" height="0" fill="#8299BA" />
<rect x="871.6" y="745.1999999999999" width="8.8" height="2.3" fill="none" stroke="#8299BA" stroke-width="1.6"/>
<rect x="888.1" y="725.0" width="1.8" height="1.1000000000000227" fill="#8299BA" />
<rect x="888.1" y="744.4" width="1.8" height="0" fill="#8299BA" />
<rect x="884.6" y="726.9" width="8.8" height="16.7" fill="none" stroke="#8299BA" stroke-width="1.6"/>
<rect x="902.1" y="716.1" width="1.8" height="4.5" fill="#8299BA" />
<rect x="902.1" y="727.2" width="1.8" height="0" fill="#8299BA" />
<rect x="898.6" y="721.4" width="8.8" height="5.0" fill="none" stroke="#8299BA" stroke-width="1.6"/>
<rect x="915.1" y="717.2" width="1.8" height="11.099999999999909" fill="#FF6A1A" />
<rect x="910.8" y="719.4" width="10.4" height="2.4" fill="#FF6A1A" />
<rect x="928.1" y="717.8" width="1.8" height="21.600000000000023" fill="#FF6A1A" />
<rect x="923.8" y="721.1" width="10.4" height="13.299999999999955" fill="#FF6A1A" />
<rect x="942.1" y="643.3" width="1.8" height="1.1000000000000227" fill="#8299BA" />
<rect x="942.1" y="679.4" width="1.8" height="0" fill="#8299BA" />
<rect x="938.6" y="645.1999999999999" width="8.8" height="33.4" fill="none" stroke="#8299BA" stroke-width="1.6"/>
<rect x="955.1" y="631.1" width="1.8" height="12.799999999999955" fill="#8299BA" />
<rect x="950.8" y="642.6999999999999" width="10.4" height="2.4" fill="#8299BA" />
<rect x="968.1" y="630.0" width="1.8" height="1.7000000000000455" fill="#8299BA" />
<rect x="968.1" y="643.3" width="1.8" height="1.1000000000000227" fill="#8299BA" />
<rect x="964.6" y="632.5" width="8.8" height="10.0" fill="none" stroke="#8299BA" stroke-width="1.6"/>
<rect x="981.1" y="628.9" width="1.8" height="8.300000000000068" fill="#8299BA" />
<rect x="976.8" y="629.9" width="10.4" height="2.4" fill="#8299BA" />
<rect x="995.1" y="627.2" width="1.8" height="11.699999999999932" fill="#FF6A1A" />
<rect x="990.8" y="630.0" width="10.4" height="3.2999999999999545" fill="#FF6A1A" />
<rect x="1008.1" y="626.7" width="1.8" height="5.5" fill="#8299BA" />
<rect x="1008.1" y="634.4" width="1.8" height="2.300000000000068" fill="#8299BA" />
<rect x="1004.6" y="633.0" width="8.8" height="0.6" fill="none" stroke="#8299BA" stroke-width="1.6"/>
<rect x="1021.1" y="627.2" width="1.8" height="17.199999999999932" fill="#FF6A1A" />
<rect x="1016.8" y="631.1" width="10.4" height="9.5" fill="#FF6A1A" />
<rect x="1035.1" y="640.0" width="1.8" height="22.200000000000045" fill="#FF6A1A" />
<rect x="1030.8" y="641.7" width="10.4" height="6.599999999999909" fill="#FF6A1A" />
<rect x="1048.1" y="636.1" width="1.8" height="4.5" fill="#8299BA" />
<rect x="1048.1" y="648.9" width="1.8" height="1.7000000000000455" fill="#8299BA" />
<rect x="1044.6" y="641.4" width="8.8" height="6.7" fill="none" stroke="#8299BA" stroke-width="1.6"/>
<rect x="1061.1" y="636.1" width="1.8" height="11.100000000000023" fill="#FF6A1A" />
<rect x="1056.8" y="640.0" width="10.4" height="7.2000000000000455" fill="#FF6A1A" />
<rect x="1075.1" y="630.0" width="1.8" height="2.7999999999999545" fill="#8299BA" />
<rect x="1075.1" y="648.3" width="1.8" height="0" fill="#8299BA" />
<rect x="1071.6" y="633.5999999999999" width="8.8" height="13.9" fill="none" stroke="#8299BA" stroke-width="1.6"/>
<rect x="1088.1" y="632.8" width="1.8" height="16.100000000000023" fill="#FF6A1A" />
<rect x="1083.8" y="632.8" width="10.4" height="4.400000000000091" fill="#FF6A1A" />
<rect x="1101.1" y="623.9" width="1.8" height="1.1000000000000227" fill="#8299BA" />
<rect x="1101.1" y="638.3" width="1.8" height="3.900000000000091" fill="#8299BA" />
<rect x="1097.6" y="625.8" width="8.8" height="11.7" fill="none" stroke="#8299BA" stroke-width="1.6"/>
<rect x="1115.1" y="651.1" width="1.8" height="9.5" fill="#FF6A1A" />
<rect x="1115.1" y="669.4" width="1.8" height="0" fill="#FF6A1A" />
<rect x="1111.6" y="661.4" width="8.8" height="7.2" fill="none" stroke="#FF6A1A" stroke-width="1.6"/>
<rect x="1128.1" y="660.0" width="1.8" height="27.200000000000045" fill="#FF6A1A" />
<rect x="1123.8" y="660.0" width="10.4" height="27.200000000000045" fill="#FF6A1A" />
<rect x="1141.1" y="680.0" width="1.8" height="12.799999999999955" fill="#FF6A1A" />
<rect x="1136.8" y="686.5999999999999" width="10.4" height="2.4" fill="#FF6A1A" />
<rect x="1155.1" y="673.9" width="1.8" height="2.800000000000068" fill="#8299BA" />
<rect x="1155.1" y="689.4" width="1.8" height="0" fill="#8299BA" />
<rect x="1151.6" y="677.5" width="8.8" height="11.1" fill="none" stroke="#8299BA" stroke-width="1.6"/>
<rect x="1168.1" y="668.9" width="1.8" height="3.8999999999999773" fill="#8299BA" />
<rect x="1168.1" y="678.3" width="1.8" height="1.7000000000000455" fill="#8299BA" />
<rect x="1164.6" y="673.5999999999999" width="8.8" height="3.9" fill="none" stroke="#8299BA" stroke-width="1.6"/>
<rect x="1181.1" y="651.1" width="1.8" height="7.7999999999999545" fill="#8299BA" />
<rect x="1181.1" y="673.3" width="1.8" height="6.7000000000000455" fill="#8299BA" />
<rect x="1177.6" y="659.6999999999999" width="8.8" height="12.8" fill="none" stroke="#8299BA" stroke-width="1.6"/>
<rect x="1194.1" y="643.9" width="1.8" height="7.800000000000068" fill="#8299BA" />
<rect x="1194.1" y="658.3" width="1.8" height="2.800000000000068" fill="#8299BA" />
<rect x="1190.6" y="652.5" width="8.8" height="5.0" fill="none" stroke="#8299BA" stroke-width="1.6"/>
<rect x="1208.1" y="628.9" width="1.8" height="8.899999999999977" fill="#8299BA" />
<rect x="1208.1" y="650.6" width="1.8" height="0" fill="#8299BA" />
<rect x="1204.6" y="638.5999999999999" width="8.8" height="11.2" fill="none" stroke="#8299BA" stroke-width="1.6"/>
<rect x="1221.1" y="633.9" width="1.8" height="10.5" fill="#FF6A1A" />
<rect x="1216.8" y="637.8" width="10.4" height="6.600000000000023" fill="#FF6A1A" />
<rect x="1234.1" y="631.1" width="1.8" height="2.7999999999999545" fill="#8299BA" />
<rect x="1234.1" y="645.6" width="1.8" height="0" fill="#8299BA" />
<rect x="1230.6" y="634.6999999999999" width="8.8" height="10.1" fill="none" stroke="#8299BA" stroke-width="1.6"/>
<rect x="1248.1" y="626.7" width="1.8" height="1.099999999999909" fill="#8299BA" />
<rect x="1248.1" y="634.4" width="1.8" height="3.8999999999999773" fill="#8299BA" />
<rect x="1244.6" y="628.5999999999999" width="8.8" height="5.0" fill="none" stroke="#8299BA" stroke-width="1.6"/>
<rect x="1261.1" y="608.9" width="1.8" height="10.5" fill="#8299BA" />
<rect x="1261.1" y="628.3" width="1.8" height="0" fill="#8299BA" />
<rect x="1257.6" y="620.1999999999999" width="8.8" height="7.3" fill="none" stroke="#8299BA" stroke-width="1.6"/>
<rect x="1274.1" y="615.0" width="1.8" height="23.299999999999955" fill="#FF6A1A" />
<rect x="1269.8" y="618.9" width="10.4" height="13.300000000000068" fill="#FF6A1A" />
<rect x="1288.1" y="616.1" width="1.8" height="25.600000000000023" fill="#FF6A1A" />
<rect x="1288.1" y="648.9" width="1.8" height="0.5" fill="#FF6A1A" />
<rect x="1284.6" y="642.5" width="8.8" height="5.6" fill="none" stroke="#FF6A1A" stroke-width="1.6"/>
<rect x="1301.1" y="641.7" width="1.8" height="23.899999999999977" fill="#FF6A1A" />
<rect x="1296.8" y="641.7" width="10.4" height="23.899999999999977" fill="#FF6A1A" />
<rect x="1314.1" y="639.4" width="1.8" height="0" fill="#8299BA" />
<rect x="1314.1" y="667.2" width="1.8" height="1.099999999999909" fill="#8299BA" />
<rect x="1310.6" y="640.1999999999999" width="8.8" height="26.2" fill="none" stroke="#8299BA" stroke-width="1.6"/>
<rect x="1328.1" y="635.6" width="1.8" height="17.699999999999932" fill="#8299BA" />
<rect x="1323.8" y="637.6999999999999" width="10.4" height="2.4" fill="#8299BA" />
<rect x="1341.1" y="633.9" width="1.8" height="23.300000000000068" fill="#FF6A1A" />
<rect x="1336.8" y="638.9" width="10.4" height="17.200000000000045" fill="#FF6A1A" />
<rect x="1354.1" y="649.4" width="1.8" height="1.2000000000000455" fill="#8299BA" />
<rect x="1354.1" y="656.7" width="1.8" height="5.0" fill="#8299BA" />
<rect x="1350.6" y="651.4" width="8.8" height="4.5" fill="none" stroke="#8299BA" stroke-width="1.6"/>
<rect x="1367.1" y="637.2" width="1.8" height="8.399999999999977" fill="#8299BA" />
<rect x="1367.1" y="650.0" width="1.8" height="0" fill="#8299BA" />
<rect x="1363.6" y="646.4" width="8.8" height="2.8" fill="none" stroke="#8299BA" stroke-width="1.6"/>
<rect x="1381.1" y="643.9" width="1.8" height="1.7000000000000455" fill="#FF6A1A" />
<rect x="1376.8" y="644.4" width="10.4" height="2.4" fill="#FF6A1A" />
<polyline points="43.9,734.4 50.6,736.7 64.4,750.6 77.8,695.6 90.6,725.0 104.4,704.4 117.8,745.6 130.6,756.7 144.4,775.6 157.8,762.8 170.6,775.0 184.2,776.7 197.6,773.9 210.6,747.8 224.4,764.4 237.2,760.6 250.6,747.2 263.9,722.8 276.7,723.9 290.6,717.8 303.9,708.3 316.7,708.9 330.6,705.0 343.9,702.8 356.7,709.4 370.6,708.9 383.9,702.2 396.7,683.9 410.6,690.0 423.9,783.9 436.7,785.6 450.6,763.9 463.9,758.9 476.7,747.8 490.6,766.7 503.3,773.3 516.7,778.9 530.0,791.1 542.8,789.4 556.7,796.1 570.0,781.1 583.3,760.6 596.7,758.9 610.0,762.2 623.3,753.3 636.7,736.7 650.0,768.9 663.3,772.2 676.7,766.7 690.6,766.7 703.3,789.4 716.7,790.0 729.4,803.9 742.8,790.6 756.7,824.4 769.4,785.6 783.3,731.7 796.7,740.6 809.4,741.7 823.3,759.4 836.7,759.4 849.4,753.3 863.3,738.9 876.1,736.7 889.4,716.7 902.8,711.7 916.7,716.7 929.4,732.2 942.8,608.3 955.6,624.4 969.4,618.9 982.8,623.9 995.6,628.9 1009.4,626.7 1022.8,636.1 1035.6,646.1 1049.4,632.8 1062.8,640.6 1075.6,622.8 1089.4,631.7 1102.8,615.6 1115.6,660.6 1129.4,691.7 1142.8,687.2 1155.6,666.7 1168.9,661.7 1181.7,646.7 1195.6,641.1 1208.9,624.4 1221.7,638.9 1235.6,625.6 1248.9,618.3 1261.7,609.4 1275.6,630.0 1288.9,636.7 1301.7,664.4 1315.6,624.4 1328.9,625.6 1341.7,651.7 1355.6,645.6 1368.9,638.3 1381.1,640.6" fill="none" stroke="#FF1010" stroke-width="1.35" stroke-linejoin="miter"/>
<polyline points="43.9,749.4 50.6,750.6 64.4,767.8 77.8,715.6 90.6,742.8 104.4,724.4 117.8,768.3 130.6,774.4 144.4,795.0 157.8,782.2 170.6,789.4 184.2,790.0 197.6,783.9 210.6,761.7 224.4,776.7 237.2,774.4 250.6,762.2 263.9,738.9 276.7,742.2 290.6,736.7 303.9,724.4 316.7,722.2 330.6,718.3 343.9,713.9 356.7,720.6 370.6,718.9 383.9,711.7 396.7,694.4 410.6,701.1 423.9,800.0 436.7,805.6 450.6,785.6 463.9,778.9 476.7,765.6 490.6,781.1 503.3,786.7 516.7,792.2 531.1,803.3 542.8,797.8 556.7,806.7 570.0,791.1 583.3,773.3 596.7,776.7 610.0,779.4 623.3,763.3 636.7,755.0 650.0,784.4 663.3,788.3 676.7,780.6 690.6,777.8 703.3,799.4 716.7,800.6 729.4,816.7 742.8,805.6 756.7,839.4 769.4,791.1 783.3,755.0 796.7,761.1 809.4,758.3 823.3,774.4 836.7,769.4 849.4,762.2 863.3,748.9 876.1,745.6 889.4,726.1 902.8,721.7 916.7,725.6 929.4,746.7 942.8,622.8 955.6,639.4 969.4,633.9 982.8,637.8 995.6,639.4 1009.4,636.1 1022.8,651.7 1035.6,658.9 1049.4,645.6 1062.8,654.4 1075.6,636.7 1089.4,643.9 1102.8,628.3 1115.6,667.2 1129.4,706.7 1142.8,700.6 1155.6,680.6 1168.9,674.4 1181.7,659.4 1195.6,653.9 1208.9,640.0 1221.7,654.4 1235.6,635.6 1248.9,630.0 1261.7,620.6 1275.6,642.8 1288.9,652.2 1301.7,683.9 1315.6,645.6 1328.9,645.6 1341.7,669.4 1355.6,660.6 1368.9,650.6 1381.1,651.7" fill="none" stroke="#00A000" stroke-width="1.35" stroke-linejoin="miter"/>
</g>
<line x1="1369" y1="584.5" x2="1369" y2="866" stroke="#33CC33" stroke-width="1.3" stroke-dasharray="5,4"/>
<path d="M1368,694 l9.5,9.5 h-6 v11.5 h-7 v-11.5 h-6 z" fill="#009000"/>
<rect x="44" y="884" width="1810" height="1.6" fill="#F0F0F0" />
<rect x="44" y="903.8" width="1810" height="1.6" fill="#F0F0F0" />
<rect x="77.17" y="884" width="1.5" height="22" fill="#F0F0F0" />
<text x="79.42" y="900" font-size="15.5" fill="#F0F0F0" text-anchor="start" font-weight="normal"  >27</text>
<rect x="103.78999999999999" y="884" width="1.5" height="6.5" fill="#F0F0F0" />
<rect x="130.41" y="884" width="1.5" height="6.5" fill="#F0F0F0" />
<rect x="157.03" y="884" width="1.5" height="6.5" fill="#F0F0F0" />
<rect x="183.64999999999998" y="884" width="1.5" height="6.5" fill="#F0F0F0" />
<rect x="210.26999999999998" y="884" width="1.5" height="6.5" fill="#F0F0F0" />
<rect x="236.89" y="884" width="1.5" height="6.5" fill="#F0F0F0" />
<rect x="250.2" y="884" width="1.5" height="22" fill="#F0F0F0" />
<text x="252.45" y="900" font-size="15.5" fill="#F0F0F0" text-anchor="start" font-weight="normal"  >28</text>
<rect x="276.82" y="884" width="1.5" height="6.5" fill="#F0F0F0" />
<rect x="303.44" y="884" width="1.5" height="6.5" fill="#F0F0F0" />
<rect x="330.06" y="884" width="1.5" height="6.5" fill="#F0F0F0" />
<rect x="356.68" y="884" width="1.5" height="6.5" fill="#F0F0F0" />
<rect x="383.3" y="884" width="1.5" height="6.5" fill="#F0F0F0" />
<rect x="409.92" y="884" width="1.5" height="6.5" fill="#F0F0F0" />
<rect x="423.23" y="884" width="1.5" height="22" fill="#F0F0F0" />
<text x="425.48" y="900" font-size="15.5" fill="#F0F0F0" text-anchor="start" font-weight="normal"  >29</text>
<rect x="449.85" y="884" width="1.5" height="6.5" fill="#F0F0F0" />
<rect x="476.47" y="884" width="1.5" height="6.5" fill="#F0F0F0" />
<rect x="503.09000000000003" y="884" width="1.5" height="6.5" fill="#F0F0F0" />
<rect x="529.71" y="884" width="1.5" height="6.5" fill="#F0F0F0" />
<rect x="556.33" y="884" width="1.5" height="6.5" fill="#F0F0F0" />
<rect x="582.9499999999999" y="884" width="1.5" height="6.5" fill="#F0F0F0" />
<rect x="596.26" y="884" width="1.5" height="22" fill="#F0F0F0" />
<text x="598.51" y="900" font-size="15.5" fill="#F0F0F0" text-anchor="start" font-weight="normal"  >30</text>
<rect x="622.88" y="884" width="1.5" height="6.5" fill="#F0F0F0" />
<rect x="649.5" y="884" width="1.5" height="6.5" fill="#F0F0F0" />
<rect x="676.12" y="884" width="1.5" height="6.5" fill="#F0F0F0" />
<rect x="702.74" y="884" width="1.5" height="6.5" fill="#F0F0F0" />
<rect x="729.36" y="884" width="1.5" height="6.5" fill="#F0F0F0" />
<rect x="755.98" y="884" width="1.5" height="6.5" fill="#F0F0F0" />
<rect x="769.29" y="884" width="1.5" height="22" fill="#F0F0F0" />
<text x="771.54" y="900" font-size="15.5" fill="#F0F0F0" text-anchor="start" font-weight="normal"  >3</text>
<rect x="795.91" y="884" width="1.5" height="6.5" fill="#F0F0F0" />
<rect x="822.53" y="884" width="1.5" height="6.5" fill="#F0F0F0" />
<rect x="849.15" y="884" width="1.5" height="6.5" fill="#F0F0F0" />
<rect x="875.77" y="884" width="1.5" height="6.5" fill="#F0F0F0" />
<rect x="902.39" y="884" width="1.5" height="6.5" fill="#F0F0F0" />
<rect x="929.01" y="884" width="1.5" height="6.5" fill="#F0F0F0" />
<rect x="942.3199999999999" y="884" width="1.5" height="22" fill="#F0F0F0" />
<text x="944.5699999999999" y="900" font-size="15.5" fill="#F0F0F0" text-anchor="start" font-weight="normal"  >4</text>
<rect x="968.9399999999999" y="884" width="1.5" height="6.5" fill="#F0F0F0" />
<rect x="995.56" y="884" width="1.5" height="6.5" fill="#F0F0F0" />
<rect x="1022.18" y="884" width="1.5" height="6.5" fill="#F0F0F0" />
<rect x="1048.8" y="884" width="1.5" height="6.5" fill="#F0F0F0" />
<rect x="1075.42" y="884" width="1.5" height="6.5" fill="#F0F0F0" />
<rect x="1102.04" y="884" width="1.5" height="6.5" fill="#F0F0F0" />
<rect x="1115.35" y="884" width="1.5" height="22" fill="#F0F0F0" />
<text x="1117.6" y="900" font-size="15.5" fill="#F0F0F0" text-anchor="start" font-weight="normal"  >5</text>
<rect x="1141.97" y="884" width="1.5" height="6.5" fill="#F0F0F0" />
<rect x="1168.59" y="884" width="1.5" height="6.5" fill="#F0F0F0" />
<rect x="1195.21" y="884" width="1.5" height="6.5" fill="#F0F0F0" />
<rect x="1221.83" y="884" width="1.5" height="6.5" fill="#F0F0F0" />
<rect x="1248.45" y="884" width="1.5" height="6.5" fill="#F0F0F0" />
<rect x="1275.07" y="884" width="1.5" height="6.5" fill="#F0F0F0" />
<rect x="1288.38" y="884" width="1.5" height="22" fill="#F0F0F0" />
<text x="1290.63" y="900" font-size="15.5" fill="#F0F0F0" text-anchor="start" font-weight="normal"  >6</text>
<rect x="1315.0" y="884" width="1.5" height="6.5" fill="#F0F0F0" />
<rect x="1341.62" y="884" width="1.5" height="6.5" fill="#F0F0F0" />
<rect x="1368.24" y="884" width="1.5" height="6.5" fill="#F0F0F0" />
<rect x="1394.86" y="884" width="1.5" height="6.5" fill="#F0F0F0" />
<rect x="1421.48" y="884" width="1.5" height="6.5" fill="#F0F0F0" />
<rect x="1448.1" y="884" width="1.5" height="6.5" fill="#F0F0F0" />
<rect x="63.86" y="884" width="1.5" height="6.5" fill="#F0F0F0" />
<rect x="1661.55" y="884" width="1.5" height="22" fill="#F0F0F0" />
<text x="1663.8" y="900" font-size="15.5" fill="#F0F0F0" text-anchor="start" font-weight="normal"  >7</text>
<rect x="1315.1499999999999" y="884" width="1.5" height="6.5" fill="#F0F0F0" />
<rect x="1341.75" y="884" width="1.5" height="6.5" fill="#F0F0F0" />
<rect x="1368.35" y="884" width="1.5" height="6.5" fill="#F0F0F0" />
<rect x="1394.95" y="884" width="1.5" height="6.5" fill="#F0F0F0" />
<rect x="1421.55" y="884" width="1.5" height="6.5" fill="#F0F0F0" />
<rect x="1448.15" y="884" width="1.5" height="6.5" fill="#F0F0F0" />
<rect x="1474.75" y="884" width="1.5" height="6.5" fill="#F0F0F0" />
<rect x="1501.35" y="884" width="1.5" height="6.5" fill="#F0F0F0" />
<rect x="1527.95" y="884" width="1.5" height="6.5" fill="#F0F0F0" />
<rect x="1554.55" y="884" width="1.5" height="6.5" fill="#F0F0F0" />
<rect x="1581.15" y="884" width="1.5" height="6.5" fill="#F0F0F0" />
<rect x="1607.75" y="884" width="1.5" height="6.5" fill="#F0F0F0" />
<rect x="1634.35" y="884" width="1.5" height="6.5" fill="#F0F0F0" />
<rect x="1688.1499999999999" y="884" width="1.5" height="6.5" fill="#F0F0F0" />
<rect x="1714.75" y="884" width="1.5" height="6.5" fill="#F0F0F0" />
<rect x="1741.35" y="884" width="1.5" height="6.5" fill="#F0F0F0" />
<rect x="1767.95" y="884" width="1.5" height="6.5" fill="#F0F0F0" />
<rect x="1794.55" y="884" width="1.5" height="6.5" fill="#F0F0F0" />
<rect x="1821.15" y="884" width="1.5" height="6.5" fill="#F0F0F0" />
<rect x="1847.75" y="884" width="1.5" height="6.5" fill="#F0F0F0" />
<text x="771" y="920" font-size="15.5" fill="#F0F0F0" text-anchor="start" font-weight="normal" textLength="55" lengthAdjust="spacingAndGlyphs" >October</text>
<rect x="770" y="904" width="1.5" height="21" fill="#F0F0F0" />
<rect x="1855" y="885" width="62" height="40" fill="#E8E8E8" />
<rect x="1856" y="886" width="60.5" height="1.2" fill="#F8F8F8" />
<rect x="1856" y="886" width="1.2" height="39" fill="#B0B0B0" />
<circle cx="1884.3" cy="904" r="9.5" fill="none" stroke="#22DD22" stroke-width="1.8"/><circle cx="1881" cy="900.5" r="1.6" fill="#22DD22"/><circle cx="1887.6" cy="900.5" r="1.6" fill="#22DD22"/><path d="M1879,906 q5.3,5 10.6,0" fill="none" stroke="#22DD22" stroke-width="1.6"/>
<rect x="44" y="924.5" width="1873" height="1.5" fill="#8A8A8A" />
<rect x="44" y="926" width="1876" height="29" fill="#EEEEEE" />
<rect x="1385" y="936" width="256" height="6.5" fill="#8A8A8A" rx="1"/>
<rect x="1665.7" y="930" width="1.3" height="18" fill="#888" />
<rect x="1725.7" y="930" width="1.3" height="18" fill="#888" />
<rect x="1837.7" y="930" width="1.3" height="18" fill="#888" />
<path d="M1676,936 a7,7 0 0 1 12,-2 l2,-3 v8 h-7 l3,-2.5 a4.5,4.5 0 0 0 -7,1.5 z" fill="#555"/>
<path d="M1689,942 a7,7 0 0 1 -12,2 l-2,3 v-8 h7 l-3,2.5 a4.5,4.5 0 0 0 7,-1.5 z" fill="#555"/>
<rect x="1707.5" y="933" width="2" height="12" fill="#555" />
<path d="M1742.3,929.5 l4,4.5 h-3 v10 h3 l-4,4.5 l-4,-4.5 h3 v-10 h-3 z" fill="#444"/>
<path d="M1769,929 l4,4 h-3 v4 h4 v-3 l4,4 l-4,4 v-3 h-4 v4 h3 l-4,4 l-4,-4 h3 v-4 h-4 v3 l-4,-4 l4,-4 v3 h4 v-4 h-3 z" fill="#444"/>
<circle cx="1795" cy="939" r="6.5" fill="none" stroke="#555" stroke-width="1.5"/>
<rect x="1791" y="938" width="8" height="2" fill="#555" />
<circle cx="1821" cy="939" r="6.5" fill="none" stroke="#555" stroke-width="1.5"/>
<rect x="1817" y="938" width="8" height="2" fill="#555" />
<rect x="1820" y="935" width="2" height="8" fill="#555" />
<path d="M1857,934 v10 l-6,-5 z" fill="#C4C4C4"/><path d="M1879,934 v10 l6,-5 z" fill="#C4C4C4"/>
<rect x="1898.5" y="932.5" width="15" height="13" fill="#F8F8F8" stroke="#555" stroke-width="1.3"/>
<rect x="1899" y="935.5" width="14" height="1.3" fill="#555" />
<rect x="1899" y="939" width="14" height="1" fill="#777" />
<rect x="1899" y="942" width="14" height="1" fill="#777" />
<rect x="1903" y="936" width="1" height="9" fill="#777" />
<rect x="0" y="954.5" width="1920" height="1" fill="#B0B0B0" />
<rect x="0" y="955.5" width="1920" height="40" fill="#E9E9E9" />
<rect x="0" y="994.2" width="1920" height="1.2" fill="#A8A8A8" />
<rect x="0" y="995.4" width="1920" height="1.2" fill="#F8F8F8" />
<rect x="6.5" y="957" width="8" height="36" fill="#D4D4D4" />
<rect x="9.0" y="973.5" width="3" height="3" fill="#777" />
<rect x="327" y="957" width="8" height="36" fill="#D4D4D4" />
<rect x="329.5" y="973.5" width="3" height="3" fill="#777" />
<rect x="486" y="957" width="8" height="36" fill="#D4D4D4" />
<rect x="488.5" y="973.5" width="3" height="3" fill="#777" />
<rect x="182" y="958" width="1.3" height="34" fill="#A0A0A0" />
<rect x="319.7" y="958" width="1.3" height="34" fill="#A0A0A0" />
<rect x="480.7" y="958" width="1.3" height="34" fill="#A0A0A0" />
<rect x="708.7" y="958" width="1.3" height="34" fill="#A0A0A0" />
<rect x="15.5" y="958" width="1" height="35" fill="#AAA" />
<rect x="335.5" y="958" width="1" height="35" fill="#AAA" />
<rect x="494.5" y="958" width="1" height="35" fill="#AAA" />
<rect x="17.5" y="964.5" width="160.5" height="24" rx="2" fill="#FFF" stroke="#A8A8A8" stroke-width="1"/>
<rect x="36.6" y="976" width="101" height="1.8" fill="#333" />
<path d="M162,974 l5,5 l5,-5" fill="none" stroke="#555" stroke-width="1.3"/>
<rect x="186.5" y="964.5" width="124" height="24" rx="2" fill="#FFF" stroke="#A8A8A8" stroke-width="1"/>
<rect x="201.6" y="976" width="73" height="1.8" fill="#333" />
<path d="M294.5,974 l5,5 l5,-5" fill="none" stroke="#555" stroke-width="1.3"/>
<rect x="341.5" y="963" width="13" height="12.5" fill="#E4E4FA" stroke="#C8C8C8" stroke-width="0.8"/>
<rect x="341.5" y="977.5" width="13" height="13" fill="#8B0000" stroke="#C8C8C8" stroke-width="0.8"/>
<rect x="356.5" y="963" width="13" height="12.5" fill="#FFCC00" stroke="#C8C8C8" stroke-width="0.8"/>
<rect x="356.5" y="977.5" width="13" height="13" fill="#5F7F8A" stroke="#C8C8C8" stroke-width="0.8"/>
<rect x="371.5" y="963" width="13" height="12.5" fill="#FFFF00" stroke="#C8C8C8" stroke-width="0.8"/>
<rect x="371.5" y="977.5" width="13" height="13" fill="#0000FF" stroke="#C8C8C8" stroke-width="0.8"/>
<rect x="386.5" y="963" width="13" height="12.5" fill="#606060" stroke="#C8C8C8" stroke-width="0.8"/>
<rect x="386.5" y="977.5" width="13" height="13" fill="#008000" stroke="#C8C8C8" stroke-width="0.8"/>
<rect x="401.5" y="963" width="13" height="12.5" fill="#33CC33" stroke="#C8C8C8" stroke-width="0.8"/>
<rect x="401.5" y="977.5" width="13" height="13" fill="#FF0000" stroke="#C8C8C8" stroke-width="0.8"/>
<rect x="416.5" y="963" width="13" height="12.5" fill="#FFFFD8" stroke="#C8C8C8" stroke-width="0.8"/>
<rect x="416.5" y="977.5" width="13" height="13" fill="#000000" stroke="#C8C8C8" stroke-width="0.8"/>
<rect x="431.5" y="963" width="13" height="12.5" fill="#FF6A13" stroke="#C8C8C8" stroke-width="0.8"/>
<rect x="431.5" y="977.5" width="13" height="13" fill="#2E7DA0" stroke="#C8C8C8" stroke-width="0.8"/>
<rect x="446.5" y="963" width="13" height="12.5" fill="#90EE90" stroke="#C8C8C8" stroke-width="0.8"/>
<rect x="446.5" y="977.5" width="13" height="13" fill="#90C8E0" stroke="#C8C8C8" stroke-width="0.8"/>
<path d="M460.5,974.5 h8 l-4,4.5 z" fill="#111"/>
<rect x="503.70000000000005" y="970.5" width="20" height="15" fill="#F4F8FC" stroke="#7A8AA0" stroke-width="1"/>
<path d="M506.70000000000005,981 l3,-3 l2,2" fill="none" stroke="#D02020" stroke-width="1.2"/>
<text x="512.7" y="983.5" font-size="10" fill="#333" text-anchor="start" font-weight="normal"  >1</text>
<rect x="537.5" y="970.5" width="20" height="15" fill="#F4F8FC" stroke="#7A8AA0" stroke-width="1"/>
<path d="M540.5,981 l3,-3 l2,2" fill="none" stroke="#D02020" stroke-width="1.2"/>
<text x="546.5" y="983.5" font-size="10" fill="#333" text-anchor="start" font-weight="normal"  >2</text>
<rect x="571.2" y="970.5" width="20" height="15" fill="#F4F8FC" stroke="#7A8AA0" stroke-width="1"/>
<path d="M574.2,981 l3,-3 l2,2" fill="none" stroke="#D02020" stroke-width="1.2"/>
<text x="580.2" y="983.5" font-size="10" fill="#333" text-anchor="start" font-weight="normal"  >3</text>
<rect x="605" y="970.5" width="20" height="15" fill="#F4F8FC" stroke="#7A8AA0" stroke-width="1"/>
<path d="M608,981 l3,-3 l2,2" fill="none" stroke="#D02020" stroke-width="1.2"/>
<text x="614" y="983.5" font-size="10" fill="#333" text-anchor="start" font-weight="normal"  >4</text>
<rect x="638.7" y="970.5" width="20" height="15" fill="#F4F8FC" stroke="#7A8AA0" stroke-width="1"/>
<path d="M641.7,981 l3,-3 l2,2" fill="none" stroke="#D02020" stroke-width="1.2"/>
<text x="647.7" y="983.5" font-size="10" fill="#333" text-anchor="start" font-weight="normal"  >5</text>
<rect x="672.5" y="970.5" width="20" height="15" fill="#F4F8FC" stroke="#7A8AA0" stroke-width="1"/>
<path d="M675.5,981 l3,-3 l2,2" fill="none" stroke="#D02020" stroke-width="1.2"/>
<text x="681.5" y="983.5" font-size="10" fill="#333" text-anchor="start" font-weight="normal"  >6</text>
<rect x="0" y="996.5" width="1920" height="23.5" fill="#404040" />
<text x="12.2" y="1014.5" font-size="15.5" fill="#E8E8E8" text-anchor="start" font-weight="normal" textLength="126.5" lengthAdjust="spacingAndGlyphs" >For Help, press F1</text>
<text x="1579.8" y="1014.5" font-size="15.5" fill="#E8E8E8" text-anchor="start" font-weight="normal" textLength="77" lengthAdjust="spacingAndGlyphs" >29/09/2022</text>
<text x="1684.8" y="1014.5" font-size="15.5" fill="#E8E8E8" text-anchor="start" font-weight="normal" textLength="36.4" lengthAdjust="spacingAndGlyphs" >10:00</text>
<text x="1776.3" y="1014.5" font-size="15.5" fill="#E8E8E8" text-anchor="start" font-weight="normal" textLength="54.7" lengthAdjust="spacingAndGlyphs" >358.451</text>
<rect x="1863.7" y="1000.6" width="24.3" height="17.6" fill="#F4F4F4" />
<text x="1869.5" y="1015.5" font-size="18" fill="#108A28" text-anchor="start" font-weight="bold"  >$</text>
<rect x="1893.7" y="1000.6" width="24.3" height="17.6" fill="#C8D0D8" />
<rect x="1897" y="1004" width="11" height="9" fill="#3A7AD0" stroke="#223" stroke-width="0.8"/><rect x="1904" y="1007" width="11" height="9" fill="#6AAAE8" stroke="#223" stroke-width="0.8"/>
<rect x="0" y="1020" width="1920" height="60" fill="#201B26" />
<defs><radialGradient id="sun" cx="0.4" cy="0.3" r="0.8"><stop offset="0" stop-color="#FFC830"/><stop offset="1" stop-color="#F08018"/></radialGradient><linearGradient id="cld" x1="0" y1="0" x2="0" y2="1"><stop offset="0" stop-color="#A8C8F0"/><stop offset="1" stop-color="#E0ECF8"/></linearGradient><linearGradient id="win" x1="0" y1="0" x2="1" y2="1"><stop offset="0" stop-color="#6FD0F8"/><stop offset="1" stop-color="#1A9AE8"/></linearGradient></defs>
<circle cx="40.6" cy="1047" r="12" fill="url(#sun)"/>
<path d="M33,1065 h20 a5,5 0 0 0 0,-10 a8,8 0 0 0 -14,-2 a6,6 0 0 0 -6,12 z" fill="url(#cld)"/>
<text x="65.6" y="1045.5" font-size="14.5" fill="#FFFFFF" text-anchor="start" font-weight="normal" textLength="30.8" lengthAdjust="spacingAndGlyphs" >27°C</text>
<text x="65.6" y="1065.8" font-size="14.5" fill="#DCDCDC" text-anchor="start" font-weight="normal" textLength="69.8" lengthAdjust="spacingAndGlyphs" >Parc. Ensol</text>
<rect x="506" y="1035.5" width="13.5" height="13.5" fill="url(#win)" rx="1"/>
<rect x="521.5" y="1035.5" width="13.5" height="13.5" fill="url(#win)" rx="1"/>
<rect x="506" y="1051.0" width="13.5" height="13.5" fill="url(#win)" rx="1"/>
<rect x="521.5" y="1051.0" width="13.5" height="13.5" fill="url(#win)" rx="1"/>
<circle cx="577" cy="1047.5" r="9.5" fill="none" stroke="#D8D8D8" stroke-width="3"/>
<line x1="570" y1="1054.5" x2="564.5" y2="1060.5" stroke="#D8D8D8" stroke-width="3.2" stroke-linecap="round"/>
<circle cx="630.5" cy="1049" r="14" fill="#7A6AE0"/><path d="M618,1058 l-2,6 l7,-3 z" fill="#7A6AE0"/>
<rect x="622" y="1044" width="12" height="10" fill="#FFF" rx="2"/>
<path d="M634,1049 l5,-4 v8 z" fill="#FFF"/>
<rect x="680" y="1037" width="20" height="25" fill="#FFFFFF" rx="1"/>
<rect x="686" y="1041" width="11" height="1.5" fill="#2B579A" />
<rect x="686" y="1045" width="11" height="1.5" fill="#2B579A" />
<rect x="686" y="1049" width="11" height="1.5" fill="#2B579A" />
<rect x="686" y="1053" width="11" height="1.5" fill="#2B579A" />
<rect x="686" y="1057" width="11" height="1.5" fill="#2B579A" />
<path d="M672,1039 l15,-3 v28 l-15,-3 z" fill="#2B5BB0"/>
<text x="673.5" y="1055" font-size="11" fill="#FFF" text-anchor="start" font-weight="bold"  >W</text>
<rect x="726" y="1036" width="29.5" height="29.5" rx="2" fill="url(#msg)"/>
<path d="M733,1062.0 l2.5,-9 h4 l-2.5,9 z" fill="#F08A1E"/>
<path d="M738.5,1062.0 l2.5,-16 h4 l-2.5,16 z" fill="#F08A1E"/>
<path d="M744,1062.0 l2.5,-23 h4 l-2.5,23 z" fill="#F08A1E"/>
<path d="M781,1040 h10 l3,3 h17 v20 h-30 z" fill="#F0B830"/>
<path d="M781,1046 h30 v17 h-30 z" fill="#FFD050"/>
<rect x="788" y="1056" width="16" height="4" fill="#2A7AD0" rx="1"/>
<circle cx="850" cy="1050" r="14" fill="#2DA84A"/>
<path d="M850,1050 L837.876,1043.0 A14,14 0 0 1 862.124,1043.0 z" fill="#E04434"/>
<path d="M850,1050 L862.124,1043.0 A14,14 0 0 1 850,1064 z" fill="#FBC02D"/>
<circle cx="850" cy="1050" r="6.3" fill="#FFF"/><circle cx="850" cy="1050" r="4.760000000000001" fill="#3A78E0"/>
<circle cx="862" cy="1039" r="9.5" fill="#F07820"/>
<text x="857.5" y="1043.5" font-size="11" fill="#FFF" text-anchor="start" font-weight="bold"  >N</text>
<rect x="902" y="1037" width="17.5" height="25" fill="#FFFFFF" rx="1"/>
<path d="M892,1039 l16,-3 v28 l-16,-3 z" fill="#D0472A"/>
<circle cx="912" cy="1047" r="4.5" fill="#D0472A"/>
<text x="895" y="1055" font-size="12" fill="#FFF" text-anchor="start" font-weight="bold"  >P</text>
<path d="M961,1036 l11,24 h-22 z" fill="#F08A10"/>
<path d="M958,1043 h6 l1.5,4 h-9 z M955.5,1050 h11 l1.5,4 h-14 z" fill="#F4F4F4"/>
<rect x="947.5" y="1058" width="27" height="6" fill="#F08A10" rx="1.5"/>
<circle cx="1016" cy="1049.5" r="14.5" fill="#1E8CD8"/>
<path d="M1004,1046 a12,12 0 0 1 24,-1 a9,8 0 0 1 -15,4 a6,6 0 0 1 3,-6 a9,9 0 0 0 -12,3 z" fill="#4CD080"/>
<circle cx="1018" cy="1052" r="6" fill="#1660B0"/>
<rect x="1067" y="1038" width="17" height="23" fill="#FFFFFF" rx="1"/>
<path d="M1072,1044 h6 v6 h-6 z" fill="none" stroke="#3955A3" stroke-width="1.3"/>
<path d="M1057,1039 l15,-3 v28 l-15,-3 z" fill="#3955A3"/>
<text x="1059.5" y="1055" font-size="11" fill="#FFF" text-anchor="start" font-weight="bold"  >V</text>
<rect x="1122" y="1037" width="18" height="25" fill="#FFFFFF" rx="1"/>
<rect x="1126" y="1041" width="11" height="1.5" fill="#217346" />
<rect x="1126" y="1045" width="11" height="1.5" fill="#217346" />
<rect x="1126" y="1049" width="11" height="1.5" fill="#217346" />
<rect x="1126" y="1053" width="11" height="1.5" fill="#217346" />
<rect x="1126" y="1057" width="11" height="1.5" fill="#217346" />
<path d="M1112,1039 l15,-3 v28 l-15,-3 z" fill="#1D6F42"/>
<text x="1114.5" y="1055" font-size="11" fill="#FFF" text-anchor="start" font-weight="bold"  >X</text>
<circle cx="1181" cy="1050" r="14" fill="#2DA84A"/>
<path d="M1181,1050 L1168.876,1043.0 A14,14 0 0 1 1193.124,1043.0 z" fill="#E04434"/>
<path d="M1181,1050 L1193.124,1043.0 A14,14 0 0 1 1181,1064 z" fill="#FBC02D"/>
<circle cx="1181" cy="1050" r="6.3" fill="#FFF"/><circle cx="1181" cy="1050" r="4.760000000000001" fill="#3A78E0"/>
<rect x="1224" y="1035" width="23" height="30" fill="#8A96A4" rx="2"/>
<rect x="1227" y="1038" width="17" height="5" fill="#5ACCF0" />
<rect x="1227" y="1045" width="4.5" height="4" fill="#D8DEE6" />
<rect x="1233" y="1045" width="4.5" height="4" fill="#D8DEE6" />
<rect x="1239" y="1045" width="4.5" height="4" fill="#D8DEE6" />
<rect x="1227" y="1050" width="4.5" height="4" fill="#D8DEE6" />
<rect x="1233" y="1050" width="4.5" height="4" fill="#D8DEE6" />
<rect x="1239" y="1050" width="4.5" height="4" fill="#D8DEE6" />
<rect x="1227" y="1055" width="4.5" height="4" fill="#D8DEE6" />
<rect x="1233" y="1055" width="4.5" height="4" fill="#D8DEE6" />
<rect x="1239" y="1055" width="4.5" height="4" fill="#1A4A90" />
<rect x="1227" y="1060" width="4.5" height="4" fill="#D8DEE6" />
<rect x="1233" y="1060" width="4.5" height="4" fill="#D8DEE6" />
<rect x="1239" y="1060" width="4.5" height="4" fill="#1A4A90" />
<rect x="1276" y="1035" width="30.5" height="30" fill="#008B8B" />
<path d="M1283,1059 h17 l-2,-6 q5,-4 2,-8 q-3,-3 -7,1 q-4,-4 -7,-1 q-3,4 2,8 z" fill="#FFFFFF" stroke="#222" stroke-width="0.8"/>
<rect x="1290.5" y="1038" width="1.5" height="6" fill="#222" />
<rect x="1288.5" y="1040" width="5.5" height="1.5" fill="#222" />
<rect x="1282" y="1059" width="19" height="3" fill="#FFF" stroke="#222" stroke-width="0.8"/>
<rect x="1321" y="1025" width="49" height="49.5" fill="#2E2A36" rx="4"/>
<rect x="1331" y="1036" width="29.5" height="29.5" rx="2" fill="url(#msg)"/>
<path d="M1338,1062.0 l2.5,-9 h4 l-2.5,9 z" fill="#F08A1E"/>
<path d="M1343.5,1062.0 l2.5,-16 h4 l-2.5,16 z" fill="#F08A1E"/>
<path d="M1349,1062.0 l2.5,-23 h4 l-2.5,23 z" fill="#F08A1E"/>
<rect x="1386.5" y="1035.5" width="29.5" height="29.5" rx="4" fill="#241820" stroke="#A01830" stroke-width="1.3"/>
<text x="1388.5" y="1059" font-size="13.5" fill="#B01C34" text-anchor="start" font-weight="normal" textLength="25" lengthAdjust="spacingAndGlyphs" >Pro</text>
<rect x="682.8" y="1070.5" width="7" height="3" fill="#9A9A9A" rx="1.5"/>
<rect x="847.3" y="1070.5" width="7" height="3" fill="#9A9A9A" rx="1.5"/>
<rect x="1122.8" y="1070.5" width="7" height="3" fill="#9A9A9A" rx="1.5"/>
<rect x="1232.3" y="1070.5" width="7" height="3" fill="#9A9A9A" rx="1.5"/>
<rect x="1397.3" y="1070.5" width="7" height="3" fill="#9A9A9A" rx="1.5"/>
<rect x="1336" y="1070.5" width="19.5" height="3" fill="#4CC2FF" rx="1.5"/>
<path d="M1659,1054 l7,-7 l7,7" fill="none" stroke="#EEE" stroke-width="1.5"/>
<path d="M1688,1056 a5,5 0 0 1 2,-9 a6,6 0 0 1 11,1 a4,4 0 0 1 0,8 z" fill="#CCCCCC"/>
<circle cx="1700" cy="1054.5" r="5" fill="#E02030"/>
<line x1="1698" y1="1052.5" x2="1702" y2="1056.5" stroke="#FFF" stroke-width="1.2" />
<line x1="1702" y1="1052.5" x2="1698" y2="1056.5" stroke="#FFF" stroke-width="1.2" />
<path d="M1721,1046 a14,14 0 0 1 19,0 M1724,1049.5 a9,9 0 0 1 13,0 M1727,1053 a4.5,4.5 0 0 1 7,0" fill="none" stroke="#F0F0F0" stroke-width="1.7"/><circle cx="1730.5" cy="1055.5" r="1.5" fill="#F0F0F0"/>
<path d="M1752,1046.5 h4 l5,-4.5 v15 l-5,-4.5 h-4 z" fill="none" stroke="#F0F0F0" stroke-width="1.4"/>
<path d="M1764,1046 a5,5 0 0 1 0,7 M1767,1043.5 a9,9 0 0 1 0,12" fill="none" stroke="#F0F0F0" stroke-width="1.4"/>
<rect x="1785" y="1045" width="14" height="9" rx="1.5" fill="none" stroke="#F0F0F0" stroke-width="1.4"/>
<rect x="1799.5" y="1047.5" width="2" height="4" fill="#F0F0F0" />
<rect x="1787" y="1047" width="6" height="5" fill="#F0F0F0" />
<line x1="1784" y1="1041" x2="1784" y2="1046" stroke="#F0F0F0" stroke-width="1.2" />
<line x1="1788" y1="1041" x2="1788" y2="1046" stroke="#F0F0F0" stroke-width="1.2" />
<text x="1894.8" y="1044.5" font-size="14.5" fill="#FFFFFF" text-anchor="end" font-weight="normal" textLength="34" lengthAdjust="spacingAndGlyphs" >18:09</text>
<text x="1894.8" y="1064.5" font-size="14.5" fill="#FFFFFF" text-anchor="end" font-weight="normal" textLength="74" lengthAdjust="spacingAndGlyphs" >06/10/2022</text>
</svg></body></html>
